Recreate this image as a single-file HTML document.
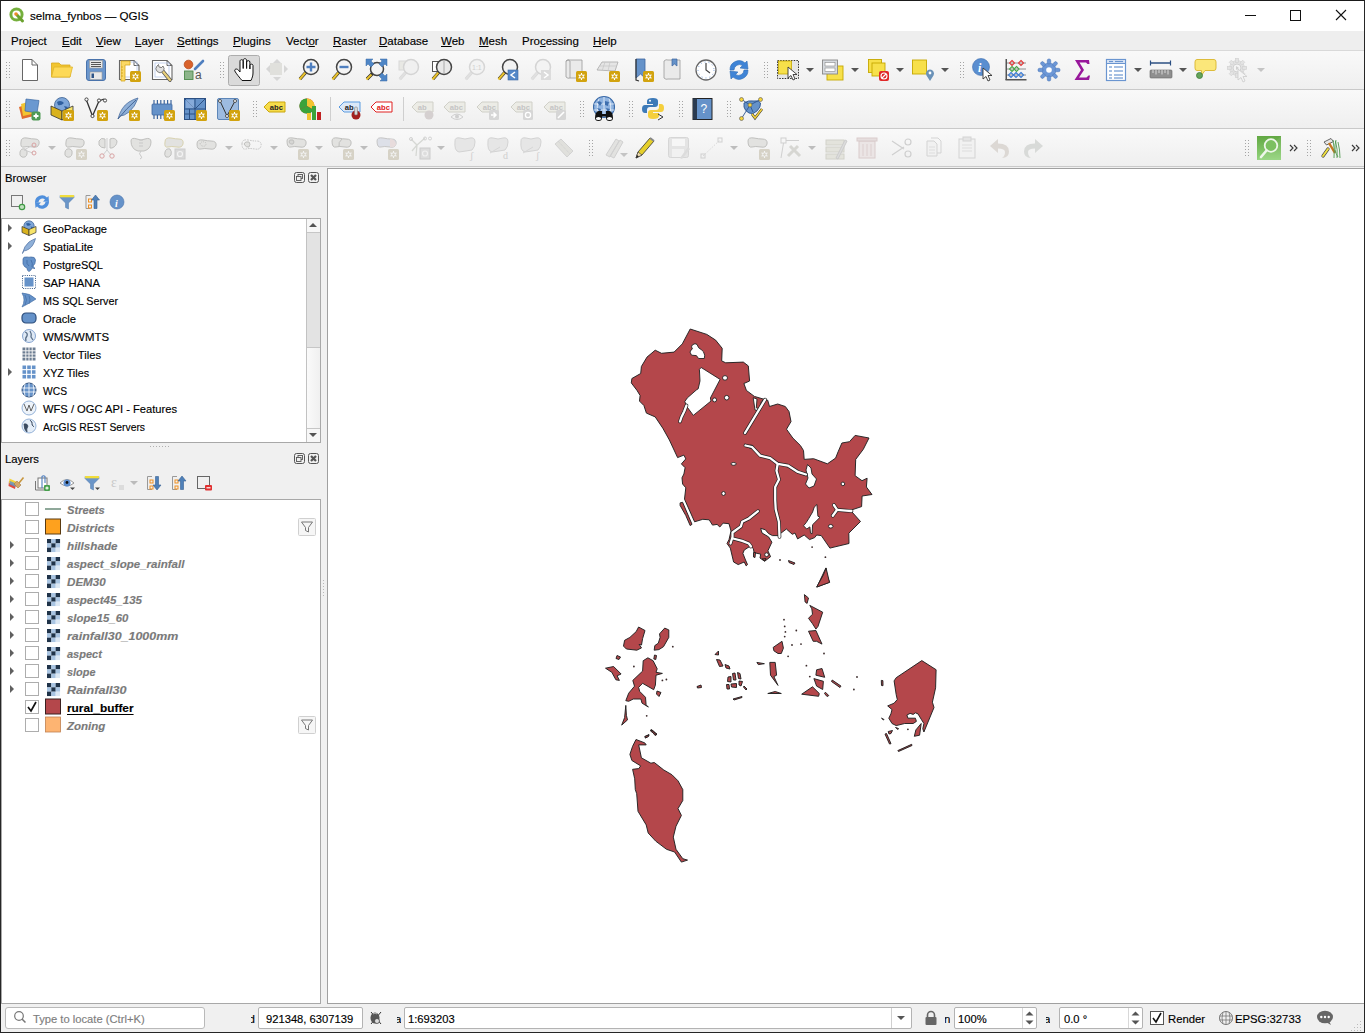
<!DOCTYPE html>
<html><head><meta charset="utf-8">
<style>
*{box-sizing:border-box;margin:0;padding:0}
html,body{width:1365px;height:1033px;overflow:hidden;background:#f0f0f0;font-family:"Liberation Sans",sans-serif;font-size:11.5px;color:#000}
.a{position:absolute}
.t{position:absolute;white-space:nowrap;line-height:14px;-webkit-text-stroke:0.15px currentColor}
#win{position:absolute;left:0;top:0;width:1365px;height:1033px;border:1px solid #262626;border-top-color:#1a1a1a}
#title{position:absolute;left:1px;top:1px;width:1363px;height:30px;background:#fff}
#menu{position:absolute;left:1px;top:31px;width:1363px;height:20px;background:#eeeeee;border-bottom:1px solid #d9d9d9}
.tb{position:absolute;left:1px;width:1363px;background:linear-gradient(#f9f9f9,#efefef);border-bottom:1px solid #c9c9c9}
.grip{position:absolute;width:5px;background-image:radial-gradient(circle,#b4b4b4 0.8px,transparent 1px);background-size:3px 3px}
.u{text-decoration:underline;text-underline-offset:1px}
#canvas{position:absolute;left:327px;top:168px;width:1037px;height:836px;background:#fff;border:1px solid #a0a0a0;border-right:none}
.box{position:absolute;background:#fff;border:1px solid #a9a9a9}
#status{position:absolute;left:1px;top:1004px;width:1363px;height:28px;background:#f0f0f0}
.field{position:absolute;background:#fff;border:1px solid #b3b3b3;border-radius:2px}
.cb{position:absolute;width:13px;height:13px;border:1px solid #8a8a8a;background:#fff}
.ln{font-weight:bold;font-style:italic;color:#7a7a7a;font-size:11.6px}
.br{font-size:11.3px}
</style></head><body>
<div id="win"></div>
<div id="title">
  <div class="t" style="left:29px;top:8px;font-size:11.6px">selma_fynbos — QGIS</div>
</div>
<div id="menu">
  <div class="t" style="left:10px;top:3px">Project</div>
  <div class="t" style="left:61px;top:3px"><span class="u">E</span>dit</div>
  <div class="t" style="left:95px;top:3px"><span class="u">V</span>iew</div>
  <div class="t" style="left:134px;top:3px"><span class="u">L</span>ayer</div>
  <div class="t" style="left:176px;top:3px"><span class="u">S</span>ettings</div>
  <div class="t" style="left:232px;top:3px"><span class="u">P</span>lugins</div>
  <div class="t" style="left:285px;top:3px">Vect<span class="u">o</span>r</div>
  <div class="t" style="left:332px;top:3px"><span class="u">R</span>aster</div>
  <div class="t" style="left:378px;top:3px"><span class="u">D</span>atabase</div>
  <div class="t" style="left:440px;top:3px"><span class="u">W</span>eb</div>
  <div class="t" style="left:478px;top:3px"><span class="u">M</span>esh</div>
  <div class="t" style="left:521px;top:3px">Pro<span class="u">c</span>essing</div>
  <div class="t" style="left:592px;top:3px"><span class="u">H</span>elp</div>
</div>
<div class="tb" style="top:51px;height:39px"></div>
<div class="tb" style="top:90px;height:39px"></div>
<div class="tb" style="top:129px;height:38px"></div>

<div id="canvas"></div>
<div id="status"></div>
<div class="t" style="left:5px;top:171px;font-size:11.3px">Browser</div>
<div class="box" style="left:1px;top:218px;width:320px;height:225px;border-color:#a8a8a8"></div>
<div class="a" style="left:306px;top:219px;width:14px;height:223px;background:linear-gradient(to right,#fafafa,#f0f0f0);border-left:1px solid #c2c2c2"></div>
<div class="a" style="left:307px;top:219px;width:13px;height:14px;background:#f7f7f7;border-bottom:1px solid #c6c6c6"></div>
<div class="a" style="left:307px;top:233px;width:13px;height:115px;background:#e3e3e3;border-bottom:1px solid #c6c6c6"></div>
<div class="a" style="left:307px;top:428px;width:13px;height:14px;background:#f7f7f7;border-top:1px solid #c6c6c6"></div>
<div class="t" style="left:43px;top:222px;font-size:11.5px;display:inline-block;transform:scaleX(0.9626);transform-origin:0 0;">GeoPackage</div>
<div class="t" style="left:43px;top:240px;font-size:11.5px;display:inline-block;transform:scaleX(0.9776);transform-origin:0 0;">SpatiaLite</div>
<div class="t" style="left:43px;top:258px;font-size:11.5px;display:inline-block;transform:scaleX(0.9578);transform-origin:0 0;">PostgreSQL</div>
<div class="t" style="left:43px;top:276px;font-size:11.5px;display:inline-block;transform:scaleX(0.9836);transform-origin:0 0;">SAP HANA</div>
<div class="t" style="left:43px;top:294px;font-size:11.5px;display:inline-block;transform:scaleX(0.9364);transform-origin:0 0;">MS SQL Server</div>
<div class="t" style="left:43px;top:312px;font-size:11.5px;display:inline-block;transform:scaleX(0.9743);transform-origin:0 0;">Oracle</div>
<div class="t" style="left:43px;top:330px;font-size:11.5px;display:inline-block;transform:scaleX(0.9935);transform-origin:0 0;">WMS/WMTS</div>
<div class="t" style="left:43px;top:348px;font-size:11.5px;display:inline-block;transform:scaleX(0.9758);transform-origin:0 0;">Vector Tiles</div>
<div class="t" style="left:43px;top:366px;font-size:11.5px;display:inline-block;transform:scaleX(0.9349);transform-origin:0 0;">XYZ Tiles</div>
<div class="t" style="left:43px;top:384px;font-size:11.5px;display:inline-block;transform:scaleX(0.8945);transform-origin:0 0;">WCS</div>
<div class="t" style="left:43px;top:402px;font-size:11.5px;display:inline-block;transform:scaleX(0.9709);transform-origin:0 0;">WFS / OGC API - Features</div>
<div class="t" style="left:43px;top:420px;font-size:11.5px;display:inline-block;transform:scaleX(0.8984);transform-origin:0 0;">ArcGIS REST Servers</div>
<div class="t" style="left:5px;top:452px;font-size:11.3px">Layers</div>
<div class="box" style="left:1px;top:499px;width:320px;height:505px;border-color:#a8a8a8"></div>
<div class="t ln" style="left:67px;top:503px;display:inline-block;transform:scaleX(0.9611);transform-origin:0 0;">Streets</div>
<div class="t ln" style="left:67px;top:521px;display:inline-block;transform:scaleX(1.0277);transform-origin:0 0;">Districts</div>
<div class="t ln" style="left:67px;top:539px;display:inline-block;transform:scaleX(1.0065);transform-origin:0 0;">hillshade</div>
<div class="t ln" style="left:67px;top:557px;display:inline-block;transform:scaleX(0.9960);transform-origin:0 0;">aspect_slope_rainfall</div>
<div class="t ln" style="left:67px;top:575px;display:inline-block;transform:scaleX(1.0005);transform-origin:0 0;">DEM30</div>
<div class="t ln" style="left:67px;top:593px;display:inline-block;transform:scaleX(0.9940);transform-origin:0 0;">aspect45_135</div>
<div class="t ln" style="left:67px;top:611px;display:inline-block;transform:scaleX(0.9801);transform-origin:0 0;">slope15_60</div>
<div class="t ln" style="left:67px;top:629px;display:inline-block;transform:scaleX(1.0721);transform-origin:0 0;">rainfall30_1000mm</div>
<div class="t ln" style="left:67px;top:647px;display:inline-block;transform:scaleX(0.9497);transform-origin:0 0;">aspect</div>
<div class="t ln" style="left:67px;top:665px;display:inline-block;transform:scaleX(0.9408);transform-origin:0 0;">slope</div>
<div class="t ln" style="left:67px;top:683px;display:inline-block;transform:scaleX(1.0877);transform-origin:0 0;">Rainfall30</div>
<div class="t" style="left:67px;top:701px;font-weight:bold;font-size:11.6px;text-decoration:underline;text-underline-offset:1.5px;display:inline-block;transform:scaleX(1.0230);transform-origin:0 0;">rural_buffer</div>
<div class="t ln" style="left:67px;top:719px;display:inline-block;transform:scaleX(0.9936);transform-origin:0 0;">Zoning</div>
<div class="field" style="left:5px;top:1007px;width:200px;height:22px;border-color:#b9b9b9;border-radius:3px"></div>
<div class="t" style="left:33px;top:1012px;color:#7d7d7d;font-size:11.2px">Type to locate (Ctrl+K)</div>
<div class="a" style="left:251px;top:1012px;width:4px;height:14px;overflow:hidden"><div class="t" style="left:-2.5px;top:0;font-size:11.5px">d</div></div>
<div class="field" style="left:258px;top:1007px;width:105px;height:22px"></div>
<div class="t" style="left:266px;top:1012px;font-size:11.2px">921348, 6307139</div>
<div class="a" style="left:397px;top:1012px;width:4px;height:14px;overflow:hidden"><div class="t" style="left:-2px;top:0;font-size:11.5px">a</div></div>
<div class="field" style="left:404px;top:1007px;width:508px;height:22px"></div>
<div class="t" style="left:408px;top:1012px;font-size:11.2px">1:693203</div>
<div class="a" style="left:891px;top:1008px;width:1px;height:20px;background:#d0d0d0"></div>
<div class="a" style="left:945px;top:1012px;width:5px;height:14px;overflow:hidden"><div class="t" style="left:-1px;top:0;font-size:11.5px">n</div></div>
<div class="field" style="left:954px;top:1007px;width:83px;height:22px"></div>
<div class="t" style="left:958px;top:1012px;font-size:11.2px">100%</div>
<div class="a" style="left:1022px;top:1008px;width:1px;height:20px;background:#d8d8d8"></div>
<div class="a" style="left:1046px;top:1012px;width:4px;height:14px;overflow:hidden"><div class="t" style="left:-2px;top:0;font-size:11.5px">a</div></div>
<div class="field" style="left:1059px;top:1007px;width:84px;height:22px"></div>
<div class="t" style="left:1064px;top:1012px;font-size:11.2px">0.0 °</div>
<div class="a" style="left:1128px;top:1008px;width:1px;height:20px;background:#d8d8d8"></div>
<div class="t" style="left:1168px;top:1012px;font-size:11.3px">Render</div>
<div class="t" style="left:1235px;top:1012px;font-size:11.3px">EPSG:32733</div>

<svg class="a" style="left:0;top:0" width="1365" height="1033" viewBox="0 0 1365 1033">
<g fill="#b4474b" stroke="#222" stroke-width="0.95" stroke-linejoin="round">
<path d="M690.2,329.0 L706.8,334.4 L715.6,340.1 L722.2,348.3 L721.7,360.9 L725.7,362.8 L743.3,362.1 L748.3,365.9 L749.6,381.0 L743.9,383.5 L746.4,390.4 L754.4,396.4 L765.1,399.6 L767.7,400.2 L769.5,406.5 L777.7,404.0 L785.3,406.5 L789.0,411.5 L791.0,421.6 L786.5,429.2 L792.8,438.0 L800.4,445.5 L803.5,450.5 L804.2,459.4 L813.6,458.7 L827.4,463.8 L835.6,458.1 L838.1,451.8 L841.9,443.0 L849.5,441.7 L855.1,435.4 L869.0,438.0 L863.3,449.3 L855.7,459.4 L855.1,475.7 L862.0,480.7 L867.1,478.2 L866.4,487.0 L872.0,494.5 L862.1,496.0 L861.6,506.6 L852.0,509.8 L852.0,512.0 L860.5,521.5 L848.8,533.2 L849.0,543.5 L829.9,548.1 L821.3,535.6 L816.7,535.0 L814.7,537.6 L809.5,539.6 L804.2,535.0 L797.6,538.9 L795.0,533.0 L792.3,534.3 L786.4,529.0 L780.4,533.6 L779.1,535.6 L772.5,535.6 L768.6,533.6 L765.3,529.7 L760.7,528.4 L762.0,533.0 L768.6,536.9 L771.9,542.2 L767.9,550.8 L770.6,556.7 L764.6,561.3 L760.0,558.0 L760.7,554.1 L754.1,552.7 L753.4,548.8 L750.8,546.2 L748.1,547.5 L744.2,550.1 L742.9,553.4 L745.5,560.0 L747.5,564.6 L746.2,565.9 L744.2,562.0 L738.2,564.6 L733.6,562.0 L730.3,548.1 L727.0,543.5 L729.0,539.6 L731.0,531.0 L729.0,523.7 L723.1,523.1 L719.8,527.0 L717.1,524.4 L712.5,525.1 L709.2,519.8 L702.8,519.3 L694.6,521.8 L684.5,499.1 L685.8,487.8 L682.6,484.0 L682.0,477.8 L683.9,474.0 L685.1,467.7 L681.4,463.9 L685.8,458.9 L683.9,455.1 L677.6,457.6 L669.4,440.0 L662.8,428.2 L655.2,416.9 L646.4,413.1 L643.9,405.5 L639.5,401.1 L640.1,395.5 L637.0,390.4 L631.3,382.9 L631.9,378.5 L640.7,373.5 L641.4,366.5 L647.0,357.1 L655.2,350.2 L661.5,353.3 L674.1,352.1 L682.3,343.9 Z"/>
<path d="M680.1,502.9 L682.6,502.3 L692.0,524.3 L690.2,525.6 L685.8,515.5 L680.1,505.4 Z"/>
<path d="M753.5,552.5 L755.5,552.5 L755.0,557.5 L753.5,557.0 Z"/>
<path d="M825.9,567.9 L827.0,575.8 L829.6,582.2 L816.9,587.0 L822.2,575.8 Z"/>
<path d="M638.6,627.0 L645.0,630.5 L642.6,638.6 L641.5,645.0 L639.1,644.4 L641.5,647.9 L636.8,650.2 L626.4,649.0 L623.5,646.1 L624.6,640.3 L629.9,637.4 L636.2,631.6 Z"/>
<path d="M664.7,628.1 L668.8,629.9 L668.8,637.4 L663.5,646.7 L658.9,649.6 L654.2,650.2 L654.8,645.6 L658.3,643.2 L660.1,637.4 L659.5,633.9 Z"/>
<path d="M605.5,668.2 L613.6,666.5 L621.1,674.0 L617.1,675.8 L619.4,680.4 L615.9,679.8 L611.8,672.3 Z"/>
<path d="M647.9,657.8 L653.1,660.7 L657.2,668.8 L656.0,672.3 L662.4,673.4 L656.0,675.2 L655.4,685.1 L653.7,689.7 L642.6,683.3 L638.6,687.4 L639.7,691.4 L645.5,697.3 L646.1,704.8 L648.4,707.1 L642.0,703.1 L640.9,699.0 L633.3,699.0 L628.7,701.3 L625.8,700.7 L628.7,693.2 L634.5,686.2 L632.8,680.4 L642.6,671.1 L643.2,660.7 Z"/>
<path d="M625.8,705.4 L626.4,715.3 L627.5,719.9 L621.7,725.1 L624.6,717.6 Z"/>
<path d="M654.5,655.0 L656.5,655.5 L655.8,659.5 L653.8,659.0 Z"/>
<path d="M617.0,655.5 L620.5,657.0 L619.0,659.5 L616.0,658.5 Z"/>
<path d="M657.0,691.0 L661.0,692.5 L659.0,696.5 L656.5,694.0 Z"/>
<path d="M697.0,686.5 L701.0,685.0 L701.5,687.5 L697.5,688.0 Z"/>
<path d="M651.0,729.5 L657.0,734.0 L656.0,735.0 L650.5,731.0 Z"/>
<path d="M645.0,736.5 L649.0,734.5 L648.5,736.0 L645.5,738.0 Z"/>
<path d="M826.1,568.1 L829.5,582.4 L816.6,587.1 L823.4,574.9 Z"/>
<path d="M804.4,594.6 L808.5,598.0 L807.1,603.4 L805.1,602.0 Z"/>
<path d="M809.8,605.4 L822.7,612.2 L818.0,626.4 L815.9,629.1 L812.5,623.7 L808.5,618.3 L812.5,614.2 L811.8,608.8 Z"/>
<path d="M808.5,631.2 L815.9,630.5 L822.0,644.1 L816.6,641.3 L813.2,641.3 Z"/>
<path d="M773.2,647.4 L782.0,641.3 L783.4,648.1 L781.3,653.5 L778.0,653.5 L773.9,650.8 Z"/>
<path d="M769.8,662.4 L775.2,662.4 L776.6,675.2 L773.9,676.6 L778.0,685.4 L770.5,675.2 Z"/>
<path d="M756.9,662.4 L764.4,663.7 L758.3,664.6 Z"/>
<path d="M767.8,693.5 L781.3,693.5 L775.2,691.5 Z"/>
<path d="M816.6,669.8 L822.0,668.5 L824.7,677.3 L815.9,675.2 Z"/>
<path d="M813.9,678.6 L823.4,681.3 L822.7,689.5 L816.6,686.1 Z"/>
<path d="M801.7,694.2 L812.5,686.8 L819.3,693.5 L818.6,696.3 Z"/>
<path d="M832.2,680.0 L841.0,686.1 L840.0,687.5 L831.5,681.5 Z"/>
<path d="M825.4,692.2 L828.8,695.6 L827.0,696.5 L824.5,693.5 Z"/>
<path d="M715.0,654.5 L718.5,651.0 L718.5,655.0 Z"/>
<path d="M716.5,659.5 L720.0,660.0 L723.0,666.0 L719.5,666.5 Z"/>
<path d="M725.0,664.5 L729.0,666.0 L730.0,669.0 L726.0,668.0 Z"/>
<path d="M728.0,677.0 L731.0,676.5 L731.0,682.0 L727.5,681.5 Z"/>
<path d="M732.5,673.5 L735.0,673.0 L736.0,680.0 L733.5,680.0 Z"/>
<path d="M737.5,672.5 L740.0,673.5 L741.0,679.0 L738.5,678.5 Z"/>
<path d="M731.0,684.0 L736.5,683.5 L736.5,687.5 L731.5,687.0 Z"/>
<path d="M726.5,684.5 L729.0,684.5 L729.5,689.0 L727.0,689.0 Z"/>
<path d="M739.0,681.0 L742.5,681.5 L741.0,686.0 L739.0,685.0 Z"/>
<path d="M744.0,686.0 L747.0,689.0 L746.0,690.0 L743.5,687.0 Z"/>
<path d="M733.0,699.0 L742.0,696.5 L742.0,697.5 L734.0,700.0 Z"/>
<path d="M788.5,560.5 L795.0,563.0 L794.0,564.5 L789.0,562.5 Z"/>
<path d="M762.0,559.0 L766.0,558.5 L765.0,561.0 Z"/>
<path d="M921.8,660.6 L936.1,669.7 L935.6,687.8 L932.4,702.2 L934.0,707.5 L923.9,732.0 L922.8,728.8 L923.9,723.5 L921.2,719.2 L918.0,713.9 L915.4,712.8 L913.2,714.4 L910.1,713.4 L906.9,715.0 L907.9,718.2 L915.4,718.2 L916.4,721.4 L913.2,723.5 L904.7,723.5 L896.2,725.6 L892.0,723.5 L888.8,718.2 L890.9,713.9 L892.0,709.6 L887.7,705.9 L894.1,703.2 L897.3,699.5 L896.2,694.7 L894.1,680.9 L896.2,677.7 Z"/>
<path d="M921.2,723.5 L919.6,735.2 L914.3,736.3 L915.9,729.9 Z"/>
<path d="M881.3,680.4 L882.9,680.6 L883.0,685.7 L881.5,685.5 Z"/>
<path d="M885.0,734.1 L886.5,733.5 L891.0,743.7 L889.5,744.0 Z"/>
<path d="M888.2,731.5 L892.5,730.5 L891.0,733.5 L889.0,734.0 Z"/>
<path d="M897.8,750.6 L911.7,744.3 L912.0,745.5 L898.5,751.5 Z"/>
<path d="M881.5,718.2 L884.0,719.5 L883.5,720.0 Z"/>
<path d="M895.5,727.5 L898.5,728.5 L898.0,729.5 Z"/>
<path d="M636.0,739.5 L644.8,742.9 L646.2,744.9 L638.7,744.9 L641.4,757.8 L650.9,763.2 L654.3,762.5 L663.8,770.0 L671.9,774.7 L678.0,780.8 L682.8,789.6 L682.8,800.5 L678.0,808.6 L681.4,815.4 L676.0,826.2 L673.3,837.1 L676.0,849.3 L682.8,858.7 L687.5,860.1 L681.4,862.1 L674.6,852.0 L666.5,849.3 L655.7,841.1 L648.2,833.0 L646.2,824.9 L638.0,811.3 L636.7,793.7 L635.3,789.6 L634.7,778.8 L632.6,769.3 L638.7,768.6 L640.7,765.9 L631.9,760.5 L629.9,754.4 L632.6,746.3 Z"/>
<path d="M644.8,736.5 L648.9,735.0 L648.5,736.5 L645.5,738.0 Z"/>
<path d="M651.0,730.0 L653.0,730.5 L656.3,735.0 L655.0,735.4 Z"/>
</g>
<g fill="#fff" stroke="#222" stroke-width="0.9" stroke-linejoin="round">
<path d="M695.0,343.7 L697.0,344.4 L698.6,347.7 L701.6,349.9 L703.4,351.6 L704.7,355.2 L704.3,358.5 L698.6,358.5 L696.4,355.6 L691.5,355.2 L690.0,352.1 L691.1,349.9 L692.4,349.0 L691.5,346.8 L692.4,344.8 Z"/>
<path d="M701.2,367.5 L720.1,379.4 L710.4,398.0 L711.0,401.0 L693.3,415.4 L687.2,407.1 L684.8,401.6 L687.2,398.0 L696.3,390.0 L698.2,388.8 L700.0,380.9 L699.4,369.3 Z"/>
<path d="M753.2,397.7 L757.0,399.0 L756.3,407.8 L759.5,409.0 L761.4,401.5 L763.0,400.0 L760.0,411.0 L755.0,410.0 Z"/>
<path d="M807.5,464.5 L811.0,468.0 L812.0,474.0 L816.5,479.0 L814.0,486.0 L809.0,488.0 L805.5,484.0 L808.0,478.0 L806.0,470.0 Z"/>
<path d="M816.9,504.5 L817.9,516.2 L820.0,517.3 L812.6,524.7 L812.1,533.8 L810.5,533.2 L809.9,526.9 L806.7,529.0 L803.5,525.8 L806.2,522.6 L808.9,518.3 L812.6,512.0 L814.2,507.2 Z"/>
<ellipse cx="766.6" cy="554.7" rx="1.9" ry="1.9"/>
<ellipse cx="725" cy="377.9" rx="2.5" ry="2.3"/>
<ellipse cx="714.6" cy="399.9" rx="2" ry="2"/>
<ellipse cx="726.7" cy="397.7" rx="2.3" ry="2.3"/>
<ellipse cx="842.9" cy="483.9" rx="1.8" ry="1.8"/>
<ellipse cx="723.5" cy="493.5" rx="1.8" ry="2"/>
<ellipse cx="733.6" cy="463.9" rx="2.6" ry="1.4"/>
<ellipse cx="830.7" cy="526.3" rx="2.3" ry="1.8"/>
<ellipse cx="751" cy="446.8" rx="2.2" ry="1.8"/>
</g>
<g fill="none" stroke-linejoin="round" stroke-linecap="round">
<path d="M686.5,405.5 L684.2,411.5 L681.5,417.0 L680.0,421.5" stroke="#222" stroke-width="3.7"/>
<path d="M765.1,399.6 L745.0,433.0" stroke="#222" stroke-width="3.7"/>
<path d="M745.5,445.5 L752.0,447.0 L760.1,455.6 L770.2,458.1 L777.7,463.8 L787.8,465.6 L797.9,471.9 L806.0,474.5" stroke="#222" stroke-width="3.7"/>
<path d="M777.7,463.8 L776.5,470.7 L779.0,479.5 L775.2,487.0 L775.2,500.0 L775.7,509.2 L778.9,521.8 L779.5,537.0" stroke="#222" stroke-width="3.7"/>
<path d="M758.0,511.2 L748.8,518.5 L742.2,521.8 L740.9,526.4 L735.6,530.3 L732.5,532.5 L732.5,537.0 L730.5,543.5" stroke="#222" stroke-width="3.7"/>
<path d="M733.0,538.5 L742.2,540.9 L748.8,543.5 L751.0,546.5" stroke="#222" stroke-width="3.7"/>
<path d="M833.9,505.0 L837.1,509.8 L832.8,515.7" stroke="#222" stroke-width="3.7"/>
<path d="M837.1,509.8 L846.0,510.6 L851.5,511.0" stroke="#222" stroke-width="3.7"/>
<path d="M686.5,405.5 L684.2,411.5 L681.5,417.0 L680.0,421.5" stroke="#fff" stroke-width="2.3"/>
<path d="M765.1,399.6 L745.0,433.0" stroke="#fff" stroke-width="2.3"/>
<path d="M745.5,445.5 L752.0,447.0 L760.1,455.6 L770.2,458.1 L777.7,463.8 L787.8,465.6 L797.9,471.9 L806.0,474.5" stroke="#fff" stroke-width="2.3"/>
<path d="M777.7,463.8 L776.5,470.7 L779.0,479.5 L775.2,487.0 L775.2,500.0 L775.7,509.2 L778.9,521.8 L779.5,537.0" stroke="#fff" stroke-width="2.3"/>
<path d="M758.0,511.2 L748.8,518.5 L742.2,521.8 L740.9,526.4 L735.6,530.3 L732.5,532.5 L732.5,537.0 L730.5,543.5" stroke="#fff" stroke-width="2.3"/>
<path d="M733.0,538.5 L742.2,540.9 L748.8,543.5 L751.0,546.5" stroke="#fff" stroke-width="2.3"/>
<path d="M833.9,505.0 L837.1,509.8 L832.8,515.7" stroke="#fff" stroke-width="2.3"/>
<path d="M837.1,509.8 L846.0,510.6 L851.5,511.0" stroke="#fff" stroke-width="2.3"/>
</g>
<g fill="#3a2a2a">
<circle cx="812.1" cy="547.1" r="0.9"/>
<circle cx="825.4" cy="557.2" r="0.9"/>
<circle cx="784" cy="619.7" r="0.9"/>
<circle cx="784.7" cy="626.4" r="0.9"/>
<circle cx="785.4" cy="631.9" r="0.9"/>
<circle cx="784.7" cy="636.6" r="0.9"/>
<circle cx="796.3" cy="630.5" r="0.9"/>
<circle cx="801" cy="644.1" r="0.9"/>
<circle cx="792" cy="645" r="0.9"/>
<circle cx="788.1" cy="656.3" r="0.9"/>
<circle cx="824" cy="653.5" r="0.9"/>
<circle cx="806.4" cy="665.7" r="0.9"/>
<circle cx="809.8" cy="676.6" r="0.9"/>
<circle cx="853.9" cy="689.5" r="0.9"/>
<circle cx="672.8" cy="646.7" r="0.9"/>
<circle cx="633.9" cy="666.5" r="0.9"/>
<circle cx="646.7" cy="715.8" r="0.9"/>
<circle cx="662.4" cy="680.4" r="0.9"/>
<circle cx="666.4" cy="679.5" r="0.9"/>
<circle cx="907.9" cy="729.3" r="0.9"/>
<circle cx="857" cy="677" r="0.9"/>
<circle cx="780" cy="560" r="0.9"/>
</g>
</svg>
<svg class="a" style="left:0;top:0" width="1365" height="1033" font-family="Liberation Sans"><g fill="#a4a4a4"><rect x="6" y="62" width="1" height="1"/><rect x="9" y="62" width="1" height="1"/><rect x="6" y="65" width="1" height="1"/><rect x="9" y="65" width="1" height="1"/><rect x="6" y="68" width="1" height="1"/><rect x="9" y="68" width="1" height="1"/><rect x="6" y="71" width="1" height="1"/><rect x="9" y="71" width="1" height="1"/><rect x="6" y="74" width="1" height="1"/><rect x="9" y="74" width="1" height="1"/><rect x="6" y="77" width="1" height="1"/><rect x="9" y="77" width="1" height="1"/></g>
<g transform="translate(18,58)" fill="none"><path d="M4.5,1.5 H14 L19.5,7 V22.5 H4.5 Z" fill="#fff" stroke="#666"/><path d="M14,1.5 V7 H19.5" fill="none" stroke="#666"/></g>
<g transform="translate(50,58)" fill="none"><path d="M1.5,5 H9 L11,7 H20 V19 H1.5 Z" fill="#f2c530" stroke="#d8a820" stroke-width="0.8"/><path d="M4,9 H22.5 L20,19 H1.5 Z" fill="#fdd957" stroke="#e0b52a" stroke-width="0.8"/></g>
<g transform="translate(84,58)" fill="none"><rect x="2.5" y="1.5" width="19" height="21" rx="2.5" fill="#6b96cc" stroke="#4a73ab"/><rect x="5.5" y="2.5" width="13" height="7.5" fill="#e8e8e8" stroke="#9a9a9a" stroke-width="0.6"/><g stroke="#555" stroke-width="1"><line x1="7" y1="4.5" x2="17" y2="4.5"/><line x1="7" y1="6.5" x2="17" y2="6.5"/><line x1="7" y1="8.5" x2="17" y2="8.5"/></g><rect x="6" y="14" width="12" height="7.5" fill="#e9e9e9" stroke="#9a9a9a" stroke-width="0.6"/><rect x="7.5" y="15.5" width="2.5" height="4.5" fill="#2f5587"/></g>
<g transform="translate(117,58)" fill="none"><path d="M2.5,2.5 H17 L22,7.5 V21.5 H2.5 Z" fill="#fff" stroke="#666" stroke-width="1.1"/><path d="M17,2.5 V7.5 H22" fill="none" stroke="#666"/><rect x="6" y="4" width="14" height="15" fill="none" stroke="#b7c9ea" stroke-width="0.8"/><path d="M4,3 H13 V7 H8 V23 H4 Z" fill="#fbd966" stroke="#d8a820" stroke-width="0.8"/><g stroke="#c99a10" stroke-width="0.7"><line x1="4" y1="9" x2="6" y2="9"/><line x1="4" y1="12" x2="6" y2="12"/><line x1="4" y1="15" x2="6" y2="15"/><line x1="4" y1="18" x2="6" y2="18"/></g><rect x="13" y="13" width="11" height="11" rx="1.5" fill="#d2a30f"/><g stroke="#fff" stroke-width="1.1"><line x1="18.5" y1="15" x2="18.5" y2="22"/><line x1="15.5" y1="16.8" x2="21.5" y2="20.2"/><line x1="15.5" y1="20.2" x2="21.5" y2="16.8"/></g><circle cx="18.5" cy="18.5" r="1.8" fill="#d2a30f" stroke="#fff" stroke-width="1"/></g>
<g transform="translate(150,58)" fill="none"><path d="M2.5,2.5 H17 L22,7.5 V21.5 H2.5 Z" fill="#fff" stroke="#666" stroke-width="1.1"/><path d="M17,2.5 V7.5 H22" fill="none" stroke="#666"/><rect x="5" y="5" width="14" height="14" fill="none" stroke="#b7c9ea" stroke-width="0.8"/><path d="M11,11 L20,22" stroke="#555" stroke-width="3.6" stroke-linecap="round"/><path d="M11,11 L20,22" stroke="#e9d07a" stroke-width="2.2" stroke-linecap="round"/><path d="M7,8 A4,4 0 1 0 13,8 L11.5,9.5 L9,9 L8.5,6.5 Z" fill="#e0e0e0" stroke="#666" stroke-width="0.8"/></g>
<g transform="translate(182,58)" fill="none"><circle cx="6.5" cy="6.5" r="4.3" fill="#d9622b" stroke="#b84d1e" stroke-width="0.8"/><line x1="13" y1="11" x2="21" y2="3" stroke="#4f7fbf" stroke-width="2.6" stroke-linecap="round"/><rect x="2.5" y="13" width="8.5" height="8.5" fill="#8db58a" stroke="#4e8a4a" stroke-width="0.9"/><text x="13" y="21" font-family="Liberation Sans" font-size="12" fill="#555">a</text></g>
<g fill="#a4a4a4"><rect x="220" y="62" width="1" height="1"/><rect x="223" y="62" width="1" height="1"/><rect x="220" y="65" width="1" height="1"/><rect x="223" y="65" width="1" height="1"/><rect x="220" y="68" width="1" height="1"/><rect x="223" y="68" width="1" height="1"/><rect x="220" y="71" width="1" height="1"/><rect x="223" y="71" width="1" height="1"/><rect x="220" y="74" width="1" height="1"/><rect x="223" y="74" width="1" height="1"/><rect x="220" y="77" width="1" height="1"/><rect x="223" y="77" width="1" height="1"/></g>
<rect x="228.5" y="55.5" width="31" height="30" rx="2" fill="#dadada" stroke="#adadad"/>
<g transform="translate(232,58)" fill="none"><path d="M10,22.5 C8,20 4,15.5 2.8,13 C2.2,11 4.8,10.2 6.5,12.2 L8,14 V3.2 C8,1.2 11.2,1.2 11.2,3.2 V10.5 V2.2 C11.2,0.2 14.6,0.2 14.6,2.2 V10.5 V4 C14.6,2.2 17.9,2.2 17.9,4 V11 V7.5 C17.9,5.7 21,5.7 21,7.5 V15 C21,18 20,20 19,22.5 Z" fill="#fff" stroke="#111" stroke-width="1" stroke-linejoin="round"/></g>
<g transform="translate(265,58)" fill="none"><rect x="5" y="5" width="12" height="12" fill="#e0e0dc"/><path d="M12,1 L16,5 H8 Z M12,23 L16,19 H8 Z M1,11 L5,7 V15 Z M23,11 L19,7 V15 Z" fill="#d6d6d6"/></g>
<g transform="translate(297,58)" fill="none"><line x1="3" y1="21" x2="9.5" y2="13.5" stroke="#222" stroke-width="3.2" stroke-linecap="butt"/><line x1="2.5" y1="21.5" x2="8.5" y2="14.5" stroke="#e8c12e" stroke-width="2.2"/><circle cx="14" cy="9" r="7.5" fill="#f4f4f4" stroke="#444" stroke-width="1.5"/><path d="M14,4.5 V13.5 M9.5,9 H18.5" stroke="#4f7fbf" stroke-width="2.4"/></g>
<g transform="translate(330,58)" fill="none"><line x1="3" y1="21" x2="9.5" y2="13.5" stroke="#222" stroke-width="3.2" stroke-linecap="butt"/><line x1="2.5" y1="21.5" x2="8.5" y2="14.5" stroke="#e8c12e" stroke-width="2.2"/><circle cx="14" cy="9" r="7.5" fill="#f4f4f4" stroke="#444" stroke-width="1.5"/><path d="M9.5,9 H18.5" stroke="#4f7fbf" stroke-width="2.4"/></g>
<g transform="translate(364,58)" fill="none"><line x1="3" y1="21" x2="8.5" y2="15.5" stroke="#222" stroke-width="3.2" stroke-linecap="butt"/><line x1="2.5" y1="21.5" x2="7.5" y2="16.5" stroke="#e8c12e" stroke-width="2.2"/><circle cx="13" cy="11" r="6.5" fill="#f4f4f4" stroke="#444" stroke-width="1.5"/><path d="M2,1 H9 L7,3 L10,6 L7,9 L4,6 L2,8 Z M23,1 V8 L21,6 L18,9 L15,6 L18,3 L16,1 Z M23,23 H16 L18,21 L15,18 L18,15 L21,18 L23,16 Z" fill="#4f86c6" stroke="#3a6aa5" stroke-width="0.5"/></g>
<g transform="translate(397,58)" fill="none"><rect x="2" y="3" width="9" height="9" fill="#e8e8e4" stroke="#d8d8d8"/><line x1="3" y1="21" x2="9.5" y2="13.5" stroke="#d6d6d6" stroke-width="3.2" stroke-linecap="butt"/><line x1="2.5" y1="21.5" x2="8.5" y2="14.5" stroke="#e0e0e0" stroke-width="2.2"/><circle cx="14" cy="9" r="7.5" fill="#f0f0f0" stroke="#d4d4d4" stroke-width="1.5"/></g>
<g transform="translate(430,58)" fill="none"><rect x="2.5" y="3.5" width="10" height="10" fill="#fff" stroke="#555"/><line x1="3" y1="21" x2="9.5" y2="13.5" stroke="#222" stroke-width="3.2" stroke-linecap="butt"/><line x1="2.5" y1="21.5" x2="8.5" y2="14.5" stroke="#e8c12e" stroke-width="2.2"/><circle cx="14" cy="9" r="7.5" fill="#e9e9e9" stroke="#444" stroke-width="1.5"/><line x1="14" y1="2" x2="14" y2="16" stroke="#aaa"/></g>
<g transform="translate(463,58)" fill="none"><line x1="3" y1="21" x2="9.5" y2="13.5" stroke="#d6d6d6" stroke-width="3.2" stroke-linecap="butt"/><line x1="2.5" y1="21.5" x2="8.5" y2="14.5" stroke="#e0e0e0" stroke-width="2.2"/><circle cx="14" cy="9" r="7.5" fill="#f3f3f3" stroke="#d6d6d6" stroke-width="1.5"/><text x="9" y="12" font-size="7" fill="#d0d0d0" font-family="Liberation Sans">1:1</text></g>
<g transform="translate(496,58)" fill="none"><line x1="3" y1="21" x2="9.5" y2="13.5" stroke="#222" stroke-width="3.2" stroke-linecap="butt"/><line x1="2.5" y1="21.5" x2="8.5" y2="14.5" stroke="#e8c12e" stroke-width="2.2"/><circle cx="14" cy="9" r="7.5" fill="#f2f2f2" stroke="#444" stroke-width="1.5"/><rect x="12" y="12" width="10" height="10" fill="#5488c8" stroke="#3c6aa3" stroke-width="0.6"/><path d="M19,14 L15,17 L19,20" fill="none" stroke="#fff" stroke-width="1.5"/></g>
<g transform="translate(529,58)" fill="none"><line x1="3" y1="21" x2="9.5" y2="13.5" stroke="#d6d6d6" stroke-width="3.2" stroke-linecap="butt"/><line x1="2.5" y1="21.5" x2="8.5" y2="14.5" stroke="#e0e0e0" stroke-width="2.2"/><circle cx="14" cy="9" r="7.5" fill="#f3f3f3" stroke="#d4d4d4" stroke-width="1.5"/><rect x="12" y="12" width="10" height="10" fill="#dcdcdc"/><path d="M15,14 L19,17 L15,20" fill="none" stroke="#fff" stroke-width="1.5"/></g>
<g transform="translate(563,58)" fill="none"><path d="M3,3 Q5,1 7,2 H19 V20 H7 Q5,21 3,19 Z" fill="#eaeaea" stroke="#999" stroke-width="0.8"/><path d="M3,3 Q5,1 7,3 V20" fill="none" stroke="#999" stroke-width="0.8"/><rect x="13" y="13" width="11" height="11" rx="1.5" fill="#d2a30f"/><g stroke="#fff" stroke-width="1.1"><line x1="18.5" y1="15" x2="18.5" y2="22"/><line x1="15.5" y1="16.8" x2="21.5" y2="20.2"/><line x1="15.5" y1="20.2" x2="21.5" y2="16.8"/></g><circle cx="18.5" cy="18.5" r="1.8" fill="#d2a30f" stroke="#fff" stroke-width="1"/></g>
<g transform="translate(596,58)" fill="none"><path d="M1,12 L6,4 H22 L19,13 Z" fill="#e5e5e5" stroke="#aaa" stroke-width="0.8"/><path d="M4,8 H21 M9,4 L6,13 M14,4 L12,13" stroke="#c6c6c6" stroke-width="0.7"/><rect x="13" y="13" width="11" height="11" rx="1.5" fill="#d2a30f"/><g stroke="#fff" stroke-width="1.1"><line x1="18.5" y1="15" x2="18.5" y2="22"/><line x1="15.5" y1="16.8" x2="21.5" y2="20.2"/><line x1="15.5" y1="20.2" x2="21.5" y2="16.8"/></g><circle cx="18.5" cy="18.5" r="1.8" fill="#d2a30f" stroke="#fff" stroke-width="1"/></g>
<g transform="translate(630,58)" fill="none"><path d="M6,1 H15 V20 L10.5,16 L6,20 Z" fill="#6592c9" stroke="#3d669e" stroke-width="0.8"/><path d="M6,1 V22 L9,23" fill="none" stroke="#333" stroke-width="1.2"/><rect x="13" y="13" width="11" height="11" rx="1.5" fill="#d2a30f"/><g stroke="#fff" stroke-width="1.1"><line x1="18.5" y1="15" x2="18.5" y2="22"/><line x1="15.5" y1="16.8" x2="21.5" y2="20.2"/><line x1="15.5" y1="20.2" x2="21.5" y2="16.8"/></g><circle cx="18.5" cy="18.5" r="1.8" fill="#d2a30f" stroke="#fff" stroke-width="1"/></g>
<g transform="translate(661,58)" fill="none"><path d="M3,3 Q5,1 7,2 H19 V21 H7 Q5,22 3,20 Z" fill="#eaeaea" stroke="#999" stroke-width="0.8"/><path d="M11,1 H16 V8 L13.5,6 L11,8 Z" fill="#6592c9" stroke="#3d669e" stroke-width="0.7"/></g>
<g transform="translate(694,58)" fill="none"><circle cx="12" cy="12" r="10" fill="#fff" stroke="#666" stroke-width="1.3"/><circle cx="12" cy="12" r="8" fill="none" stroke="#5b8ad0" stroke-width="0.8" stroke-dasharray="1 3"/><path d="M12,5 V12 L16,15" fill="none" stroke="#444" stroke-width="1.2"/></g>
<g transform="translate(727,58)" fill="none"><path d="M3,12 A9,9 0 0 1 18,5 L20,3 L21,11 L13,10 L15.5,7.5 A5.5,5.5 0 0 0 7,12 Z" fill="#3f84d6" stroke="#2f6db5" stroke-width="0.6"/><path d="M21,12 A9,9 0 0 1 6,19 L4,21 L3,13 L11,14 L8.5,16.5 A5.5,5.5 0 0 0 17,12 Z" fill="#3f84d6" stroke="#2f6db5" stroke-width="0.6"/></g>
<g fill="#a4a4a4"><rect x="764" y="62" width="1" height="1"/><rect x="767" y="62" width="1" height="1"/><rect x="764" y="65" width="1" height="1"/><rect x="767" y="65" width="1" height="1"/><rect x="764" y="68" width="1" height="1"/><rect x="767" y="68" width="1" height="1"/><rect x="764" y="71" width="1" height="1"/><rect x="767" y="71" width="1" height="1"/><rect x="764" y="74" width="1" height="1"/><rect x="767" y="74" width="1" height="1"/><rect x="764" y="77" width="1" height="1"/><rect x="767" y="77" width="1" height="1"/></g>
<g transform="translate(776,58)" fill="none"><rect x="1.5" y="2.5" width="21" height="18" fill="#e6e6e6" stroke="#333" stroke-dasharray="1.5 1.2"/><rect x="2.5" y="3" width="13" height="13" fill="#f7e04a" stroke="#c5a800" stroke-width="0.8"/><path transform="translate(12,9) scale(1)" d="M0,0 L0,11 L3,8.5 L5,13 L7,12 L5,7.5 L9,7.5 Z" fill="#fff" stroke="#333" stroke-width="0.9" stroke-linejoin="round"/></g>
<path d="M806,68 L814,68 L810,72 Z" fill="#555"/>
<g transform="translate(821,58)" fill="none"><rect x="6" y="8" width="16" height="14" fill="#f7e04a" stroke="#c5a800" stroke-width="0.9"/><rect x="1.5" y="2" width="15" height="14" fill="#d7dbe0" stroke="#888" stroke-width="0.9"/><rect x="4" y="4.5" width="10" height="3.5" fill="#fff" stroke="#888" stroke-width="0.6"/><rect x="4" y="10" width="10" height="3.5" fill="#fff" stroke="#888" stroke-width="0.6"/></g>
<path d="M851,68 L859,68 L855,72 Z" fill="#555"/>
<g transform="translate(867,58)" fill="none"><rect x="1.5" y="1.5" width="13" height="13" fill="#f7e04a" stroke="#c5a800" stroke-width="0.9"/><rect x="5" y="5" width="13" height="13" fill="#f7e04a" stroke="#c5a800" stroke-width="0.9"/><rect x="12" y="13" width="10" height="10" rx="2" fill="#e02828"/><circle cx="17" cy="18" r="3" fill="none" stroke="#fff" stroke-width="1.1"/><line x1="15" y1="20" x2="19" y2="16" stroke="#fff" stroke-width="1.1"/></g>
<path d="M896,68 L904,68 L900,72 Z" fill="#555"/>
<g transform="translate(911,58)" fill="none"><rect x="1.5" y="2" width="14" height="14" fill="#f7e04a" stroke="#c5a800" stroke-width="0.9"/><path d="M19,23 L15.5,17.5 A4,4 0 1 1 22.5,17.5 Z" fill="#6a92b8"/><circle cx="19" cy="15" r="1.4" fill="#fff"/></g>
<path d="M941,68 L949,68 L945,72 Z" fill="#555"/>
<g fill="#a4a4a4"><rect x="960" y="62" width="1" height="1"/><rect x="963" y="62" width="1" height="1"/><rect x="960" y="65" width="1" height="1"/><rect x="963" y="65" width="1" height="1"/><rect x="960" y="68" width="1" height="1"/><rect x="963" y="68" width="1" height="1"/><rect x="960" y="71" width="1" height="1"/><rect x="963" y="71" width="1" height="1"/><rect x="960" y="74" width="1" height="1"/><rect x="963" y="74" width="1" height="1"/><rect x="960" y="77" width="1" height="1"/><rect x="963" y="77" width="1" height="1"/></g>
<g transform="translate(971,58)" fill="none"><circle cx="10" cy="9" r="8.5" fill="#5a8ed0" stroke="#3f6fae" stroke-width="0.6"/><text x="7" y="14" font-family="Liberation Serif" font-style="italic" font-weight="bold" font-size="12" fill="#fff">i</text><path transform="translate(12,10) scale(1)" d="M0,0 L0,11 L3,8.5 L5,13 L7,12 L5,7.5 L9,7.5 Z" fill="#fff" stroke="#333" stroke-width="0.9" stroke-linejoin="round"/></g>
<g transform="translate(1004,58)" fill="none"><rect x="1.5" y="1" width="1.5" height="21" fill="#555"/><rect x="1.5" y="21" width="21" height="1.5" fill="#555"/><g stroke="#777" stroke-width="0.8"><line x1="3" y1="5" x2="22" y2="5"/><line x1="3" y1="11" x2="22" y2="11"/><line x1="3" y1="17" x2="22" y2="17"/></g><g fill="none" stroke-width="1.1"><g stroke="#e03a3a"><path d="M8,2.5 L10.5,5 L8,7.5 L5.5,5 Z"/><path d="M17,2.5 L19.5,5 L17,7.5 L14.5,5 Z"/></g><g stroke="#4aa54a"><path d="M8,8.5 L10.5,11 L8,13.5 L5.5,11 Z"/><path d="M12.5,8.5 L15,11 L12.5,13.5 L10,11 Z"/></g><g stroke="#3a7bd5"><path d="M7,14.5 L9.5,17 L7,19.5 L4.5,17 Z"/><path d="M12,14.5 L14.5,17 L12,19.5 L9.5,17 Z"/><path d="M17,14.5 L19.5,17 L17,19.5 L14.5,17 Z"/></g></g></g>
<g transform="translate(1037,58)" fill="none"><g fill="#6c97d6" stroke="#4d79bb" stroke-width="0.6"><circle cx="12" cy="12" r="7"/><rect x="10.3" y="1" width="3.4" height="5" rx="1.5" transform="rotate(0 12 12)"/><rect x="10.3" y="1" width="3.4" height="5" rx="1.5" transform="rotate(45 12 12)"/><rect x="10.3" y="1" width="3.4" height="5" rx="1.5" transform="rotate(90 12 12)"/><rect x="10.3" y="1" width="3.4" height="5" rx="1.5" transform="rotate(135 12 12)"/><rect x="10.3" y="1" width="3.4" height="5" rx="1.5" transform="rotate(180 12 12)"/><rect x="10.3" y="1" width="3.4" height="5" rx="1.5" transform="rotate(225 12 12)"/><rect x="10.3" y="1" width="3.4" height="5" rx="1.5" transform="rotate(270 12 12)"/><rect x="10.3" y="1" width="3.4" height="5" rx="1.5" transform="rotate(315 12 12)"/></g><circle cx="12" cy="12" r="2.8" fill="#fff"/></g>
<g transform="translate(1070,58)" fill="none"><path d="M5,2 H19 L19.5,6 H17.5 L16,4.5 H9.5 L14,12 L9,19.5 H16.5 L18.5,17.5 H20 L19,22 H4.5 L11,12 Z" fill="#98179b"/></g>
<g transform="translate(1104,58)" fill="none"><rect x="2.5" y="1.5" width="19" height="21" fill="#fff" stroke="#6a95d0" stroke-width="1.2"/><rect x="2.5" y="1.5" width="19" height="4" fill="#d7e3f4" stroke="#6a95d0" stroke-width="1"/><g stroke="#6a95d0" stroke-width="1.2"><line x1="5" y1="3.5" x2="9" y2="3.5"/><line x1="11" y1="3.5" x2="19" y2="3.5"/><line x1="5" y1="9" x2="8" y2="9"/><line x1="10" y1="9" x2="19" y2="9"/><line x1="5" y1="13" x2="8" y2="13"/><line x1="10" y1="13" x2="19" y2="13"/><line x1="5" y1="17" x2="8" y2="17"/><line x1="10" y1="17" x2="19" y2="17"/><line x1="5" y1="20" x2="8" y2="20"/><line x1="10" y1="20" x2="19" y2="20"/></g></g>
<path d="M1134,68 L1142,68 L1138,72 Z" fill="#555"/>
<g transform="translate(1149,58)" fill="none"><path d="M1,5 H22" stroke="#2b4f82" stroke-width="1.5"/><path d="M1.5,2.5 V7.5 M21.5,2.5 V7.5" stroke="#2b4f82" stroke-width="1.2"/><rect x="1" y="12" width="22" height="8" rx="1" fill="#8f8f8f" stroke="#666" stroke-width="0.6"/><g stroke="#eee" stroke-width="0.8"><line x1="4" y1="12" x2="4" y2="15"/><line x1="7" y1="12" x2="7" y2="16.5"/><line x1="10" y1="12" x2="10" y2="15"/><line x1="13" y1="12" x2="13" y2="16.5"/><line x1="16" y1="12" x2="16" y2="15"/><line x1="19" y1="12" x2="19" y2="16.5"/></g></g>
<path d="M1179,68 L1187,68 L1183,72 Z" fill="#555"/>
<g transform="translate(1194,58)" fill="none"><path d="M3,1.5 H20 Q22,1.5 22,4 V10 Q22,12.5 20,12.5 H11 L7,18 L7.5,12.5 H3 Q1,12.5 1,10 V4 Q1,1.5 3,1.5 Z" fill="#fbe77a" stroke="#d9b52b" stroke-width="0.9"/><circle cx="5.5" cy="17.5" r="3" fill="#63a35a" stroke="#3d7a36" stroke-width="0.8"/></g>
<g transform="translate(1226,58)" fill="none"><g fill="#e3e3e3" stroke="#d2d2d2" stroke-width="0.7"><circle cx="11" cy="10" r="7.5"/><rect x="9.5" y="0.5" width="3" height="4" transform="rotate(0 11 10)"/><rect x="9.5" y="0.5" width="3" height="4" transform="rotate(45 11 10)"/><rect x="9.5" y="0.5" width="3" height="4" transform="rotate(90 11 10)"/><rect x="9.5" y="0.5" width="3" height="4" transform="rotate(135 11 10)"/><rect x="9.5" y="0.5" width="3" height="4" transform="rotate(180 11 10)"/><rect x="9.5" y="0.5" width="3" height="4" transform="rotate(225 11 10)"/><rect x="9.5" y="0.5" width="3" height="4" transform="rotate(270 11 10)"/><rect x="9.5" y="0.5" width="3" height="4" transform="rotate(315 11 10)"/></g><circle cx="11" cy="10" r="4" fill="#f4f4f4" stroke="#d0d0d0"/><path d="M10,8 L13,10 L10,12 Z" fill="#d0d0d0"/><path transform="translate(12,11)" d="M0,0 L0,11 L3,8.5 L5,13 L7,12 L5,7.5 L9,7.5 Z" fill="#f4f4f4" stroke="#cfcfcf" stroke-width="0.9"/></g>
<path d="M1257,68 L1265,68 L1261,72 Z" fill="#c4c4c4"/>
<g fill="#a4a4a4"><rect x="6" y="101" width="1" height="1"/><rect x="9" y="101" width="1" height="1"/><rect x="6" y="104" width="1" height="1"/><rect x="9" y="104" width="1" height="1"/><rect x="6" y="107" width="1" height="1"/><rect x="9" y="107" width="1" height="1"/><rect x="6" y="110" width="1" height="1"/><rect x="9" y="110" width="1" height="1"/><rect x="6" y="113" width="1" height="1"/><rect x="9" y="113" width="1" height="1"/><rect x="6" y="116" width="1" height="1"/><rect x="9" y="116" width="1" height="1"/></g>
<g transform="translate(18,97)" fill="none"><path d="M1,10 L13,6 L16,19 L4,22 Z" fill="#e06c2e"/><path d="M3,7 L13,4 L14,17 L5,19 Z" fill="#f2c530"/><path d="M8,2 L21,3.5 L19,16 L7,14 Z" fill="#6a98d0" stroke="#3e6aa3" stroke-width="0.7"/><rect x="13.5" y="14.5" width="9" height="9" rx="2" fill="#4f9a55"/><path d="M18,16.5 V21.5 M15.5,19 H20.5" stroke="#fff" stroke-width="1.8"/></g>
<g transform="translate(50,97)" fill="none"><circle cx="12" cy="8" r="7.5" fill="#7ea6d8" stroke="#3a5f90" stroke-width="0.8"/><path d="M7,5 Q11,2.5 14,6 Q11,9 8,8 Z M14,9 L18,10 L16,13 Z" fill="#2f5f9f"/><path d="M1,9 L12,14 V23 L1,18 Z" fill="#d9b21e" stroke="#333" stroke-width="0.8" stroke-linejoin="round"/><path d="M12,14 L23,9 V18 L12,23 Z" fill="#f7e46a" stroke="#333" stroke-width="0.8" stroke-linejoin="round"/><rect x="13" y="13" width="11" height="11" rx="1.5" fill="#d2a30f"/><g stroke="#fff" stroke-width="1.1"><line x1="18.5" y1="15" x2="18.5" y2="22"/><line x1="15.5" y1="16.8" x2="21.5" y2="20.2"/><line x1="15.5" y1="20.2" x2="21.5" y2="16.8"/></g><circle cx="18.5" cy="18.5" r="1.8" fill="#d2a30f" stroke="#fff" stroke-width="1"/></g>
<g transform="translate(84,97)" fill="none"><path d="M2,2 L8.5,19 L15,4 L20,2" fill="none" stroke="#333" stroke-width="1.3"/><g fill="#fff" stroke="#333" stroke-width="0.9"><circle cx="2.5" cy="2.5" r="1.6"/><circle cx="8.5" cy="19" r="1.6"/><circle cx="15" cy="3.5" r="1.6"/><circle cx="21" cy="3.5" r="1.6"/></g><rect x="13" y="13" width="11" height="11" rx="1.5" fill="#d2a30f"/><g stroke="#fff" stroke-width="1.1"><line x1="18.5" y1="15" x2="18.5" y2="22"/><line x1="15.5" y1="16.8" x2="21.5" y2="20.2"/><line x1="15.5" y1="20.2" x2="21.5" y2="16.8"/></g><circle cx="18.5" cy="18.5" r="1.8" fill="#d2a30f" stroke="#fff" stroke-width="1"/></g>
<g transform="translate(116,97)" fill="none"><path d="M2,22 Q5,10 13,5 Q18,2 22,1 Q19,10 13,15 Q8,19 4,19 Z" fill="#8fb0d8" stroke="#4d6fa0" stroke-width="0.8"/><path d="M2,22 Q10,12 20,3" fill="none" stroke="#3d5f90" stroke-width="0.9"/><rect x="13" y="13" width="11" height="11" rx="1.5" fill="#d2a30f"/><g stroke="#fff" stroke-width="1.1"><line x1="18.5" y1="15" x2="18.5" y2="22"/><line x1="15.5" y1="16.8" x2="21.5" y2="20.2"/><line x1="15.5" y1="20.2" x2="21.5" y2="16.8"/></g><circle cx="18.5" cy="18.5" r="1.8" fill="#d2a30f" stroke="#fff" stroke-width="1"/></g>
<g transform="translate(151,97)" fill="none"><rect x="1" y="7" width="20" height="11" rx="1" fill="#6592c9" stroke="#3d669e" stroke-width="0.8"/><g stroke="#3d669e" stroke-width="1.2"><line x1="3.0" y1="3" x2="3.0" y2="7"/><line x1="3.0" y1="18" x2="3.0" y2="22"/><line x1="6.4" y1="3" x2="6.4" y2="7"/><line x1="6.4" y1="18" x2="6.4" y2="22"/><line x1="9.8" y1="3" x2="9.8" y2="7"/><line x1="9.8" y1="18" x2="9.8" y2="22"/><line x1="13.2" y1="3" x2="13.2" y2="7"/><line x1="13.2" y1="18" x2="13.2" y2="22"/><line x1="16.6" y1="3" x2="16.6" y2="7"/><line x1="16.6" y1="18" x2="16.6" y2="22"/><line x1="20.0" y1="3" x2="20.0" y2="7"/><line x1="20.0" y1="18" x2="20.0" y2="22"/></g><rect x="13" y="13" width="11" height="11" rx="1.5" fill="#d2a30f"/><g stroke="#fff" stroke-width="1.1"><line x1="18.5" y1="15" x2="18.5" y2="22"/><line x1="15.5" y1="16.8" x2="21.5" y2="20.2"/><line x1="15.5" y1="20.2" x2="21.5" y2="16.8"/></g><circle cx="18.5" cy="18.5" r="1.8" fill="#d2a30f" stroke="#fff" stroke-width="1"/></g>
<g transform="translate(183,97)" fill="none"><rect x="1.5" y="1.5" width="21" height="21" fill="#6592c9" stroke="#2c5083" stroke-width="1"/><path d="M1.5,1.5 L12,12 L22.5,1.5 M12,1.5 V22.5 M1.5,12 H22.5 M1.5,17 H12 M6.5,12 V22.5" fill="none" stroke="#2c5083" stroke-width="1"/><rect x="3" y="3" width="8" height="8" fill="#9dbbe4" opacity="0.6"/><rect x="13" y="13" width="11" height="11" rx="1.5" fill="#d2a30f"/><g stroke="#fff" stroke-width="1.1"><line x1="18.5" y1="15" x2="18.5" y2="22"/><line x1="15.5" y1="16.8" x2="21.5" y2="20.2"/><line x1="15.5" y1="20.2" x2="21.5" y2="16.8"/></g><circle cx="18.5" cy="18.5" r="1.8" fill="#d2a30f" stroke="#fff" stroke-width="1"/></g>
<g transform="translate(216,97)" fill="none"><rect x="1.5" y="1.5" width="21" height="21" rx="1.5" fill="#9dbbe0" stroke="#5d86b8" stroke-width="1"/><path d="M4,4 L11,19 L19,4" fill="none" stroke="#333" stroke-width="1"/><g fill="#fff" stroke="#333" stroke-width="0.8"><circle cx="4" cy="4" r="1.5"/><circle cx="11" cy="19" r="1.5"/><circle cx="19" cy="4" r="1.5"/></g><rect x="13" y="13" width="11" height="11" rx="1.5" fill="#d2a30f"/><g stroke="#fff" stroke-width="1.1"><line x1="18.5" y1="15" x2="18.5" y2="22"/><line x1="15.5" y1="16.8" x2="21.5" y2="20.2"/><line x1="15.5" y1="20.2" x2="21.5" y2="16.8"/></g><circle cx="18.5" cy="18.5" r="1.8" fill="#d2a30f" stroke="#fff" stroke-width="1"/></g>
<g fill="#a4a4a4"><rect x="253" y="101" width="1" height="1"/><rect x="256" y="101" width="1" height="1"/><rect x="253" y="104" width="1" height="1"/><rect x="256" y="104" width="1" height="1"/><rect x="253" y="107" width="1" height="1"/><rect x="256" y="107" width="1" height="1"/><rect x="253" y="110" width="1" height="1"/><rect x="256" y="110" width="1" height="1"/><rect x="253" y="113" width="1" height="1"/><rect x="256" y="113" width="1" height="1"/><rect x="253" y="116" width="1" height="1"/><rect x="256" y="116" width="1" height="1"/></g>
<g transform="translate(263,97)" fill="none"><path d="M1,10 L6,5 H22 V15 H6 Z" fill="#f6dc4a" stroke="#caa70f" stroke-width="1"/><text x="6.8" y="13.3" font-family="Liberation Sans" font-weight="bold" font-size="7.6" fill="#222">abc</text></g>
<g transform="translate(298,97)" fill="none"><circle cx="9" cy="9" r="7.5" fill="#d92b2b"/><path d="M9,9 V1.5 A7.5,7.5 0 0 1 15.5,12.7 Z" fill="#f2c530"/><path d="M9,9 L15.5,12.7 A7.5,7.5 0 0 1 2,12 Z" fill="#3ba33b"/><path d="M9,9 L2,12 A7.5,7.5 0 0 1 9,1.5 Z" fill="#3ba33b"/><rect x="9" y="16" width="4" height="7" fill="#f2c530"/><rect x="14" y="9" width="4" height="14" fill="#3ba33b"/><rect x="19" y="15" width="4" height="8" fill="#c02020"/></g>
<line x1="330.5" y1="97" x2="330.5" y2="121" stroke="#cfcfcf"/>
<g transform="translate(338,97)" fill="none"><path d="M1,10 L6,5 H22 V15 H6 Z" fill="#dbe8f8" stroke="#5b9be0" stroke-width="1"/><text x="6.8" y="13.3" font-family="Liberation Sans" font-weight="bold" font-size="7.6" fill="#222">ab</text><circle cx="18" cy="18" r="4.5" fill="#a31f1f"/><rect x="16.5" y="10" width="3" height="8" rx="1.2" fill="#d7d7d7" stroke="#777" stroke-width="0.5"/></g>
<g transform="translate(370,97)" fill="none"><path d="M1,10 L6,5 H22 V15 H6 Z" fill="#fff" stroke="#e02020" stroke-width="1"/><text x="6.8" y="13.3" font-family="Liberation Sans" font-weight="bold" font-size="7.6" fill="#e02020">abc</text></g>
<line x1="403.5" y1="97" x2="403.5" y2="121" stroke="#cfcfcf"/>
<g transform="translate(411,97)" fill="none"><path d="M1,10 L6,5 H22 V15 H6 Z" fill="#ecece6" stroke="#d0d0c8" stroke-width="1"/><text x="6.8" y="13.3" font-family="Liberation Sans" font-weight="bold" font-size="7.6" fill="#c4c4c4">ab</text><circle cx="18" cy="18" r="4.5" fill="#d5d0d0"/></g>
<g transform="translate(443,97)" fill="none"><path d="M1,10 L6,5 H22 V15 H6 Z" fill="#ecece6" stroke="#d0d0c8" stroke-width="1"/><text x="6.8" y="13.3" font-family="Liberation Sans" font-weight="bold" font-size="7.6" fill="#c4c4c4">abc</text><path d="M8,20 Q14,14 20,20 Q14,25 8,20 Z" fill="#f3f3f3" stroke="#cfcfcf"/><circle cx="14" cy="19.5" r="2" fill="#cfcfcf"/></g>
<g transform="translate(476,97)" fill="none"><path d="M1,10 L6,5 H22 V15 H6 Z" fill="#ecece6" stroke="#d0d0c8" stroke-width="1"/><text x="6.8" y="13.3" font-family="Liberation Sans" font-weight="bold" font-size="7.6" fill="#c4c4c4">abc</text><rect x="13" y="13" width="10" height="10" rx="1.5" fill="#d6d6d6"/><path d="M15,18 H19 M17.5,15.5 L20,18 L17.5,20.5" fill="none" stroke="#fff" stroke-width="1.5"/></g>
<g transform="translate(510,97)" fill="none"><path d="M1,10 L6,5 H22 V15 H6 Z" fill="#ecece6" stroke="#d0d0c8" stroke-width="1"/><text x="6.8" y="13.3" font-family="Liberation Sans" font-weight="bold" font-size="7.6" fill="#c4c4c4">abc</text><rect x="13" y="13" width="10" height="10" rx="1.5" fill="#d6d6d6"/><circle cx="18" cy="18" r="2.6" fill="none" stroke="#fff" stroke-width="1.3"/></g>
<g transform="translate(543,97)" fill="none"><path d="M1,10 L6,5 H22 V15 H6 Z" fill="#ecece6" stroke="#d0d0c8" stroke-width="1"/><text x="6.8" y="13.3" font-family="Liberation Sans" font-weight="bold" font-size="7.6" fill="#c4c4c4">abc</text><rect x="13" y="13" width="10" height="10" rx="1.5" fill="#d6d6d6"/><path d="M15,21 L21,15" stroke="#fff" stroke-width="1.6"/></g>
<g fill="#a4a4a4"><rect x="580" y="101" width="1" height="1"/><rect x="583" y="101" width="1" height="1"/><rect x="580" y="104" width="1" height="1"/><rect x="583" y="104" width="1" height="1"/><rect x="580" y="107" width="1" height="1"/><rect x="583" y="107" width="1" height="1"/><rect x="580" y="110" width="1" height="1"/><rect x="583" y="110" width="1" height="1"/><rect x="580" y="113" width="1" height="1"/><rect x="583" y="113" width="1" height="1"/><rect x="580" y="116" width="1" height="1"/><rect x="583" y="116" width="1" height="1"/></g>
<g transform="translate(592,97)" fill="none"><circle cx="12" cy="10" r="10.5" fill="#8fb3e0" stroke="#3a6aa8" stroke-width="1.1"/><path d="M2,7 H22 M1.8,13 H22.2 M12,0 V20 M7,1.5 Q3.5,10 7,18.5 M17,1.5 Q20.5,10 17,18.5" fill="none" stroke="#eaf1fa" stroke-width="0.8"/><path d="M5,5 Q8,3 10,6 L8,9 Z M13,4 L17,5 L16,9 L13,8 Z M14,11 L18,12 L16,16 Z M5,11 L9,12 L8,15 Z" fill="#3f6fae"/><path d="M3,21 Q3,15 6.5,14 L10,14 V17 H14 V14 L17.5,14 Q21,15 21,21 Q21,24 17.5,24 Q14,24 14,21 V19.5 H10 V21 Q10,24 6.5,24 Q3,24 3,21 Z" fill="#111"/><ellipse cx="6.5" cy="21.5" rx="2.6" ry="1.6" fill="#fff"/><ellipse cx="17.5" cy="21.5" rx="2.6" ry="1.6" fill="#fff"/></g>
<g fill="#a4a4a4"><rect x="629" y="101" width="1" height="1"/><rect x="632" y="101" width="1" height="1"/><rect x="629" y="104" width="1" height="1"/><rect x="632" y="104" width="1" height="1"/><rect x="629" y="107" width="1" height="1"/><rect x="632" y="107" width="1" height="1"/><rect x="629" y="110" width="1" height="1"/><rect x="632" y="110" width="1" height="1"/><rect x="629" y="113" width="1" height="1"/><rect x="632" y="113" width="1" height="1"/><rect x="629" y="116" width="1" height="1"/><rect x="632" y="116" width="1" height="1"/></g>
<g transform="translate(641,97)" fill="none"><path d="M12,1 Q6,1 6,4 V7 H12 V8 H4 Q1,8 1,12 Q1,16 4,16 H6 V13 Q6,10 9,10 H14 Q17,10 17,7 V4 Q17,1 12,1 Z" fill="#3d7ab8"/><path d="M12,22 Q18,22 18,19 V16 H12 V15 H20 Q23,15 23,11 Q23,7 20,7 H18 V10 Q18,13 15,13 H10 Q7,13 7,16 V19 Q7,22 12,22 Z" fill="#f5cf3c"/><circle cx="9" cy="3.8" r="1" fill="#fff"/><path d="M17,17 L22,20 L17,23" fill="none" stroke="#333" stroke-width="1"/></g>
<g fill="#a4a4a4"><rect x="679" y="101" width="1" height="1"/><rect x="682" y="101" width="1" height="1"/><rect x="679" y="104" width="1" height="1"/><rect x="682" y="104" width="1" height="1"/><rect x="679" y="107" width="1" height="1"/><rect x="682" y="107" width="1" height="1"/><rect x="679" y="110" width="1" height="1"/><rect x="682" y="110" width="1" height="1"/><rect x="679" y="113" width="1" height="1"/><rect x="682" y="113" width="1" height="1"/><rect x="679" y="116" width="1" height="1"/><rect x="682" y="116" width="1" height="1"/></g>
<g transform="translate(690,97)" fill="none"><rect x="3" y="1.5" width="19" height="21" fill="#6592c9" stroke="#222" stroke-width="1"/><rect x="3" y="1.5" width="4" height="21" fill="#2a3a4f"/><text x="10.5" y="16" font-family="Liberation Sans" font-size="12" fill="#fff">?</text></g>
<g fill="#a4a4a4"><rect x="727" y="101" width="1" height="1"/><rect x="730" y="101" width="1" height="1"/><rect x="727" y="104" width="1" height="1"/><rect x="730" y="104" width="1" height="1"/><rect x="727" y="107" width="1" height="1"/><rect x="730" y="107" width="1" height="1"/><rect x="727" y="110" width="1" height="1"/><rect x="730" y="110" width="1" height="1"/><rect x="727" y="113" width="1" height="1"/><rect x="730" y="113" width="1" height="1"/><rect x="727" y="116" width="1" height="1"/><rect x="730" y="116" width="1" height="1"/></g>
<g transform="translate(739,97)" fill="none"><path d="M5,6 Q9,3 15,4 Q20,3 21.5,6 Q22,10 18,14 Q14,18 10,16 Q6,14 5,10 Z" fill="#6592c9" stroke="#2e568e" stroke-width="0.9"/><path d="M2,2 L11,8 L21.5,2.5 M11,8 L14,15 M11,8 L2.5,21.5" fill="none" stroke="#2e568e" stroke-width="0.9"/><g fill="#f5d33a" stroke="#555" stroke-width="0.6"><circle cx="2.5" cy="2.5" r="2"/><circle cx="21.5" cy="2.5" r="2"/><circle cx="11" cy="8" r="2"/><circle cx="2.5" cy="21.5" r="2"/></g><path d="M13,17 L16,21 L23,12" fill="none" stroke="#333" stroke-width="2.6"/><path d="M13,17 L16,21 L23,12" fill="none" stroke="#f5d33a" stroke-width="1.6"/></g>
<g fill="#a4a4a4"><rect x="6" y="140" width="1" height="1"/><rect x="9" y="140" width="1" height="1"/><rect x="6" y="143" width="1" height="1"/><rect x="9" y="143" width="1" height="1"/><rect x="6" y="146" width="1" height="1"/><rect x="9" y="146" width="1" height="1"/><rect x="6" y="149" width="1" height="1"/><rect x="9" y="149" width="1" height="1"/><rect x="6" y="152" width="1" height="1"/><rect x="9" y="152" width="1" height="1"/><rect x="6" y="155" width="1" height="1"/><rect x="9" y="155" width="1" height="1"/></g>
<g transform="translate(18,136)" fill="none"><path d="M3,6 Q3,1 9,2 Q14,3 17,3 Q22,3 21,8 Q20,12 15,11 Q9,10 6,11 Q2,12 3,6 Z" fill="#e2e2e0" stroke="#c0c0be" stroke-width="1"/><path d="M2,16 Q3,12 7,13 Q10,14 9,18 Q8,22 4,21 Q1,20 2,16 Z" fill="#e2e2e0" stroke="#c0c0be"/><path d="M6,14 L15,9 M6,14 L15,17" stroke="#cfcfcf"/><circle cx="16" cy="9" r="2" fill="none" stroke="#d9a3a3"/><circle cx="16" cy="17" r="2" fill="none" stroke="#d9a3a3"/></g>
<path d="M48,146 L56,146 L52,150 Z" fill="#bdbdbd"/>
<g transform="translate(63,136)" fill="none"><path d="M3,6 Q3,1 9,2 Q14,3 17,3 Q22,3 21,8 Q20,12 15,11 Q9,10 6,11 Q2,12 3,6 Z" fill="#e2e2e0" stroke="#c0c0be" stroke-width="1"/><path d="M2,16 Q3,12 7,13 Q10,14 9,18 Q8,22 4,21 Q1,20 2,16 Z" fill="#e2e2e0" stroke="#c0c0be"/><rect x="13" y="13" width="11" height="11" rx="1.5" fill="#d6d2c6"/><g stroke="#f3f3f3" stroke-width="1.1"><line x1="18.5" y1="15" x2="18.5" y2="22"/><line x1="15.5" y1="16.8" x2="21.5" y2="20.2"/><line x1="15.5" y1="20.2" x2="21.5" y2="16.8"/></g><circle cx="18.5" cy="18.5" r="1.8" fill="#d6d2c6" stroke="#f3f3f3" stroke-width="1"/></g>
<g transform="translate(96,136)" fill="none"><path d="M3,5 Q5,1 9,3 V12 Q5,12 3,9 Z M14,3 Q19,1 21,5 Q21,10 16,12 H14 Z" fill="#e2e2e0" stroke="#c0c0be"/><path d="M11,2 V14 L7,19 M11,14 L15,19" stroke="#cfcfcf"/><circle cx="6" cy="20" r="2.2" fill="none" stroke="#d9a3a3"/><circle cx="16" cy="20" r="2.2" fill="none" stroke="#d9a3a3"/></g>
<g transform="translate(129,136)" fill="none"><path d="M2,5 Q2,1 8,3 L12,4 L16,3 Q22,1 22,6 Q22,13 15,15 H9 Q2,13 2,5 Z" fill="#e2e2e0" stroke="#c0c0be"/><path d="M10,4 H14 M10,7 H14 M10,10 H14 M12,15 Q9,18 12,20 Q14,22 11,23" fill="none" stroke="#c8c8c8"/></g>
<g transform="translate(162,136)" fill="none"><path d="M3,6 Q3,1 9,2 Q14,3 17,3 Q22,3 21,8 Q20,12 15,11 Q9,10 6,11 Q2,12 3,6 Z" fill="#e2e2e0" stroke="#d8d2b0" stroke-width="1"/><path d="M3,16 Q4,12 8,13 Q10,15 9,19 Q7,22 4,21 Q2,19 3,16 Z" fill="#e2e2e0" stroke="#c0c0be"/><rect x="13" y="13" width="10" height="10" fill="#d9d9d9" stroke="#ccc"/><circle cx="18" cy="18" r="2.5" fill="none" stroke="#f3f3f3" stroke-width="1.2"/></g>
<g transform="translate(195,136)" fill="none"><path d="M2,8 Q2,3 8,4 Q13,5 16,5 Q22,5 21,10 Q20,14 15,13 Q9,12 6,13 Q2,14 2,8 Z" fill="#e2e2e0" stroke="#c0c0be"/><path d="M5,8 Q6,5 10,6 Q12,8 10,10 Q7,11 5,8 Z" fill="none" stroke="#c0c0be" stroke-dasharray="1 1"/></g>
<path d="M225,146 L233,146 L229,150 Z" fill="#bdbdbd"/>
<g transform="translate(240,136)" fill="none"><path d="M2,8 Q2,3 8,4 Q13,5 16,5 Q22,5 21,10 Q20,14 15,13 Q9,12 6,13 Q2,14 2,8 Z" fill="none" stroke="#c3c3c3" stroke-dasharray="1.5 1"/><path d="M4,8 Q5,5 9,6 Q11,8 9,11 Q6,12 4,8 Z" fill="#e2e2e0" stroke="#c0c0be"/></g>
<path d="M270,146 L278,146 L274,150 Z" fill="#bdbdbd"/>
<g transform="translate(285,136)" fill="none"><path d="M2,5 Q2,1 8,2 Q13,3 16,3 Q22,3 21,8 Q20,12 15,11 Q9,10 6,11 Q2,12 2,5 Z" fill="#e2e2e0" stroke="#c0c0be"/><path d="M4,6 Q4,3 8,4 Q10,6 8,8 Q5,9 4,6 Z" fill="#d6d6d4" stroke="#c0c0be"/><rect x="13" y="13" width="11" height="11" rx="1.5" fill="#d6d2c6"/><g stroke="#f3f3f3" stroke-width="1.1"><line x1="18.5" y1="15" x2="18.5" y2="22"/><line x1="15.5" y1="16.8" x2="21.5" y2="20.2"/><line x1="15.5" y1="20.2" x2="21.5" y2="16.8"/></g><circle cx="18.5" cy="18.5" r="1.8" fill="#d6d2c6" stroke="#f3f3f3" stroke-width="1"/></g>
<path d="M315,146 L323,146 L319,150 Z" fill="#bdbdbd"/>
<g transform="translate(330,136)" fill="none"><path d="M2,5 Q2,1 8,2 Q13,3 16,3 Q22,3 21,8 Q20,12 15,11 Q9,10 6,11 Q2,12 2,5 Z" fill="#e2e2e0" stroke="#c0c0be"/><path d="M12,3 Q8,6 9,11" fill="none" stroke="#c0c0be"/><rect x="13" y="13" width="11" height="11" rx="1.5" fill="#d6d2c6"/><g stroke="#f3f3f3" stroke-width="1.1"><line x1="18.5" y1="15" x2="18.5" y2="22"/><line x1="15.5" y1="16.8" x2="21.5" y2="20.2"/><line x1="15.5" y1="20.2" x2="21.5" y2="16.8"/></g><circle cx="18.5" cy="18.5" r="1.8" fill="#d6d2c6" stroke="#f3f3f3" stroke-width="1"/></g>
<path d="M360,146 L368,146 L364,150 Z" fill="#bdbdbd"/>
<g transform="translate(375,136)" fill="none"><path d="M2,5 Q2,1 8,2 Q13,3 16,3 Q22,3 21,8 Q20,12 15,11 Q9,10 6,11 Q2,12 2,5 Z" fill="#dde0e8" stroke="#c6c6c6"/><path d="M15,3 Q20,3 21,8 Q20,12 15,11 Z" fill="#e8dcdc"/><rect x="13" y="13" width="11" height="11" rx="1.5" fill="#d6d2c6"/><g stroke="#f3f3f3" stroke-width="1.1"><line x1="18.5" y1="15" x2="18.5" y2="22"/><line x1="15.5" y1="16.8" x2="21.5" y2="20.2"/><line x1="15.5" y1="20.2" x2="21.5" y2="16.8"/></g><circle cx="18.5" cy="18.5" r="1.8" fill="#d6d2c6" stroke="#f3f3f3" stroke-width="1"/></g>
<g transform="translate(408,136)" fill="none"><path d="M3,3 L9,9 L17,2 M9,9 L8,20 M9,9 L4,15" fill="none" stroke="#d6d8d4" stroke-width="1.3"/><g fill="none" stroke="#d2d2d2"><circle cx="3" cy="3" r="1.5"/><circle cx="17" cy="2.5" r="1.5"/><circle cx="22" cy="2.5" r="1.5"/></g><rect x="12" y="12" width="10" height="11" fill="#dddddd" stroke="#ccc"/><circle cx="17" cy="17.5" r="2.5" fill="none" stroke="#f0f0f0" stroke-width="1.2"/></g>
<path d="M437,146 L445,146 L441,150 Z" fill="#bdbdbd"/>
<g transform="translate(453,136)" fill="none"><path d="M2,5 Q2,1 7,2 L12,3 L17,2 Q22,1 22,6 Q22,11 19,14 L13,15 L6,16 Q1,15 2,5 Z" fill="#e6e6e6" stroke="#d3d3d3"/><text x="17" y="23" font-family="Liberation Serif" font-size="10" fill="#cfcfcf">ʃ</text></g>
<g transform="translate(486,136)" fill="none"><path d="M2,5 Q2,1 7,2 L12,3 L17,2 Q22,1 22,6 Q22,11 19,14 L13,15 L6,16 Q1,15 2,5 Z" fill="#e6e6e6" stroke="#d3d3d3"/><text x="17" y="23" font-family="Liberation Serif" font-size="10" fill="#cfcfcf">d</text><path d="M4,17 L14,11" stroke="#d6d6d6"/></g>
<g transform="translate(519,136)" fill="none"><path d="M2,5 Q2,1 7,2 L12,3 L17,2 Q22,1 22,6 Q22,11 19,14 L13,15 L6,16 Q1,15 2,5 Z" fill="#e6e6e6" stroke="#d3d3d3"/><text x="17" y="23" font-family="Liberation Serif" font-size="10" fill="#cfcfcf">ʃ</text><path d="M4,17 L14,11" stroke="#d6d6d6"/></g>
<g transform="translate(552,136)" fill="none"><path d="M3,8 L9,3 L21,15 L15,21 Z" fill="#e0e0dc" stroke="#d3d3d3"/><path d="M6,5 L18,18" stroke="#d0d0d0" stroke-dasharray="1 1"/></g>
<g fill="#a4a4a4"><rect x="589" y="140" width="1" height="1"/><rect x="592" y="140" width="1" height="1"/><rect x="589" y="143" width="1" height="1"/><rect x="592" y="143" width="1" height="1"/><rect x="589" y="146" width="1" height="1"/><rect x="592" y="146" width="1" height="1"/><rect x="589" y="149" width="1" height="1"/><rect x="592" y="149" width="1" height="1"/><rect x="589" y="152" width="1" height="1"/><rect x="592" y="152" width="1" height="1"/><rect x="589" y="155" width="1" height="1"/><rect x="592" y="155" width="1" height="1"/></g>
<g transform="translate(602,136)" fill="none"><path d="M4,19 L14,3 L17,5 L8,21 Z M8,20 L18,4 L21,6 L12,22 Z" fill="#e2e2e0" stroke="#d0d0d0"/></g>
<path d="M620,153 L628,153 L624,157 Z" fill="#c4c4c4"/>
<g transform="translate(633,136)" fill="none"><path d="M3,22 L5,16 L17,2 L21,5 L9,19 Z" fill="#e5cf2b" stroke="#333" stroke-width="0.8"/><path d="M3,22 L5,16 L9,19 Z" fill="#f0dcb0" stroke="#333" stroke-width="0.6"/><path d="M3,22 L4,19 L6,20.5 Z" fill="#222"/><path d="M17,2 L21,5" stroke="#888" stroke-width="2"/></g>
<g transform="translate(667,136)" fill="none"><rect x="1.5" y="1.5" width="20" height="20" rx="2" fill="#e4e4e4" stroke="#d6d6d6"/><rect x="5" y="3" width="13" height="7" fill="#f6f6f6"/><rect x="5" y="13" width="12" height="8" fill="#f1f1f1"/><path d="M13,22 L21,11 L23,13 L15,23 Z" fill="#dcdcdc"/></g>
<g transform="translate(700,136)" fill="none"><path d="M3,20 L20,4" stroke="#d8d8d8" stroke-dasharray="1.5 1.5"/><rect x="1" y="18" width="4" height="4" fill="none" stroke="#d0d0d0"/><rect x="18" y="2" width="4" height="4" fill="none" stroke="#d0d0d0"/></g>
<path d="M730,146 L738,146 L734,150 Z" fill="#bdbdbd"/>
<g transform="translate(746,136)" fill="none"><path d="M2,5 Q2,1 8,2 Q13,3 16,3 Q22,3 21,8 Q20,12 15,11 Q9,10 6,11 Q2,12 2,5 Z" fill="#e2e2e0" stroke="#c0c0be"/><rect x="13" y="13" width="11" height="11" rx="1.5" fill="#d6d2c6"/><g stroke="#f3f3f3" stroke-width="1.1"><line x1="18.5" y1="15" x2="18.5" y2="22"/><line x1="15.5" y1="16.8" x2="21.5" y2="20.2"/><line x1="15.5" y1="20.2" x2="21.5" y2="16.8"/></g><circle cx="18.5" cy="18.5" r="1.8" fill="#d6d2c6" stroke="#f3f3f3" stroke-width="1"/></g>
<g transform="translate(779,136)" fill="none"><rect x="2" y="2" width="5" height="5" fill="none" stroke="#cfcfcf"/><path d="M7,4.5 H20 M4.5,7 L2,22" stroke="#d0d0d0"/><path d="M9,20 L19,10 M11,10 L21,20" stroke="#d6d6d2" stroke-width="3"/></g>
<path d="M808,146 L816,146 L812,150 Z" fill="#bdbdbd"/>
<g transform="translate(824,136)" fill="none"><rect x="2" y="4" width="18" height="5" fill="#e3e3dc" stroke="#d2d2ca"/><rect x="2" y="11" width="18" height="5" fill="#e3e3dc" stroke="#d2d2ca"/><rect x="2" y="18" width="18" height="5" fill="#e3e3dc" stroke="#d2d2ca"/><path d="M12,22 L21,4 L23,5 L14,23 Z" fill="#dcdcdc" stroke="#ccc"/></g>
<g transform="translate(855,136)" fill="none"><rect x="4" y="5" width="16" height="17" fill="#ebe5e5" stroke="#d9cccc"/><rect x="2" y="2" width="20" height="3" fill="#e6dede" stroke="#d9cccc"/><path d="M8,8 V20 M12,8 V20 M16,8 V20" stroke="#dccfcf"/></g>
<g transform="translate(889,136)" fill="none"><path d="M3,5 L15,13 M3,19 L15,11" stroke="#cfcfcf" stroke-width="1.2"/><circle cx="19" cy="6" r="3" fill="none" stroke="#cfcfcf" stroke-width="1.2"/><circle cx="19" cy="18" r="3" fill="none" stroke="#cfcfcf" stroke-width="1.2"/></g>
<g transform="translate(922,136)" fill="none"><path d="M5,5 H12 L15,8 V20 H5 Z" fill="#f1f1f1" stroke="#d3d3d3"/><path d="M9,2 H16 L19,5 V17 H15" fill="none" stroke="#d3d3d3"/><path d="M7,11 H13 M7,14 H13 M7,17 H13" stroke="#ddd"/></g>
<g transform="translate(955,136)" fill="none"><rect x="4" y="3" width="16" height="19" fill="#f1f1f1" stroke="#d3d3d3"/><rect x="8" y="1" width="8" height="4" fill="#e5e5e5" stroke="#d3d3d3"/><path d="M7,9 H17 M7,12 H17 M7,15 H17" stroke="#ddd"/></g>
<g transform="translate(988,136)" fill="none"><path d="M2,10 L10,3 V7.5 Q21,7.5 21,15.5 Q21,22 14,22 Q17,20 17,16 Q17,12.5 10,12.5 V17 Z" fill="#dcd8d4"/></g>
<g transform="translate(1021,136)" fill="none"><path d="M22,10 L14,3 V7.5 Q3,7.5 3,15.5 Q3,22 10,22 Q7,20 7,16 Q7,12.5 14,12.5 V17 Z" fill="#d8dad8"/></g>
<g fill="#a4a4a4"><rect x="1245" y="140" width="1" height="1"/><rect x="1248" y="140" width="1" height="1"/><rect x="1245" y="143" width="1" height="1"/><rect x="1248" y="143" width="1" height="1"/><rect x="1245" y="146" width="1" height="1"/><rect x="1248" y="146" width="1" height="1"/><rect x="1245" y="149" width="1" height="1"/><rect x="1248" y="149" width="1" height="1"/><rect x="1245" y="152" width="1" height="1"/><rect x="1248" y="152" width="1" height="1"/><rect x="1245" y="155" width="1" height="1"/><rect x="1248" y="155" width="1" height="1"/></g>
<defs><linearGradient id="gs" x1="0" y1="0" x2="0" y2="1"><stop offset="0" stop-color="#62a843"/><stop offset="1" stop-color="#93d47c"/></linearGradient></defs><rect x="1257" y="136" width="24" height="24" fill="url(#gs)"/><path d="M1257,160 L1281,136 V160 Z" fill="#fff" opacity="0.08"/>
<g transform="translate(1257,136)" fill="none"><circle cx="14" cy="9.5" r="6.3" fill="#7cc061" stroke="#eef6ea" stroke-width="1.8"/><line x1="4" y1="21" x2="9.5" y2="14.5" stroke="#eef6ea" stroke-width="2.6" stroke-linecap="round"/></g>
<path d="M1290,145 L1293,148 L1290,151 M1294,145 L1297,148 L1294,151" fill="none" stroke="#3a3a3a" stroke-width="1.15"/>
<g fill="#a4a4a4"><rect x="1307" y="140" width="1" height="1"/><rect x="1310" y="140" width="1" height="1"/><rect x="1307" y="143" width="1" height="1"/><rect x="1310" y="143" width="1" height="1"/><rect x="1307" y="146" width="1" height="1"/><rect x="1310" y="146" width="1" height="1"/><rect x="1307" y="149" width="1" height="1"/><rect x="1310" y="149" width="1" height="1"/><rect x="1307" y="152" width="1" height="1"/><rect x="1310" y="152" width="1" height="1"/><rect x="1307" y="155" width="1" height="1"/><rect x="1310" y="155" width="1" height="1"/></g>
<g transform="translate(1320,136)" fill="none"><path d="M4,6 L11,2.5 L13.5,5.5 L6.5,9 Z" fill="#e6e6e6" stroke="#444" stroke-width="0.8"/><path d="M9,7 L15,17" stroke="#c4761e" stroke-width="2.4"/><path d="M3,20 L8,13" stroke="#444" stroke-width="3.2" stroke-linecap="round"/><path d="M3,20 L8,13" stroke="#f0e040" stroke-width="2" stroke-linecap="round"/><path d="M13,4 Q15,14 14,22 M15.5,5 Q18,14 17,22 M18,6 Q20,14 20,22 M16,4 Q13,14 18,21" fill="none" stroke="#4f9a4f" stroke-width="0.9"/></g>
<path d="M1352,145 L1355,148 L1352,151 M1356,145 L1359,148 L1356,151" fill="none" stroke="#3a3a3a" stroke-width="1.15"/>
</svg>
<svg class="a" style="left:0;top:0" width="1365" height="1033" font-family="Liberation Sans">
<g transform="translate(9.0,7.0)" fill="none"><circle cx="7.5" cy="7.5" r="5.6" fill="none" stroke="#7cb342" stroke-width="3"/><circle cx="7.5" cy="7.5" r="5.6" fill="none" stroke="#589f2a" stroke-width="1" opacity="0.4"/><path d="M8,8 L13.5,14" stroke="#6aa12e" stroke-width="3" stroke-linecap="round"/><circle cx="7" cy="7" r="1.8" fill="#ee8a2a"/></g>
<line x1="1245" y1="15.5" x2="1256" y2="15.5" stroke="#111" stroke-width="1"/>
<rect x="1290.5" y="10.5" width="10" height="10" fill="none" stroke="#111" stroke-width="1"/>
<path d="M1336,10 L1346,20 M1346,10 L1336,20" stroke="#111" stroke-width="1.1"/>
<rect x="294.5" y="172.5" width="10" height="10" rx="2" fill="none" stroke="#555" stroke-width="1"/><rect x="298" y="174.5" width="4.5" height="4" fill="none" stroke="#555" stroke-width="0.9"/><rect x="296.5" y="176.5" width="4.5" height="4" fill="#f0f0f0" stroke="#555" stroke-width="0.9"/>
<rect x="308.5" y="172.5" width="10" height="10" rx="2" fill="none" stroke="#555" stroke-width="1"/><path d="M311,175 L316,180 M316,175 L311,180" stroke="#555" stroke-width="2.2"/>
<rect x="294.5" y="453.5" width="10" height="10" rx="2" fill="none" stroke="#555" stroke-width="1"/><rect x="298" y="455.5" width="4.5" height="4" fill="none" stroke="#555" stroke-width="0.9"/><rect x="296.5" y="457.5" width="4.5" height="4" fill="#f0f0f0" stroke="#555" stroke-width="0.9"/>
<rect x="308.5" y="453.5" width="10" height="10" rx="2" fill="none" stroke="#555" stroke-width="1"/><path d="M311,456 L316,461 M316,456 L311,461" stroke="#555" stroke-width="2.2"/>
<g transform="translate(9.0,194.0)" fill="none"><rect x="2.5" y="1.5" width="11" height="11" fill="#f0f0f0" stroke="#777" stroke-width="1"/><circle cx="13" cy="13" r="2.7" fill="#bfe0bd" stroke="#3f9a45" stroke-width="1.2"/></g>
<g transform="translate(34.0,194.0)" fill="none"><path d="M1,8 A7,7 0 0 1 13,3.5 L14.5,2 L15,8 L9,7.5 L11,5.5 A4,4 0 0 0 4.5,8 Z" fill="#4f8fdc"/><path d="M15,8 A7,7 0 0 1 3,12.5 L1.5,14 L1,8 L7,8.5 L5,10.5 A4,4 0 0 0 11.5,8 Z" fill="#4f8fdc"/></g>
<g transform="translate(59.0,194.0)" fill="none"><path d="M1,1.5 H15 V3.5 L9.5,9 V15 L6.5,13.5 V9 L1,3.5 Z" fill="#6a95c8" stroke="#4c78ad" stroke-width="0.5"/><rect x="1" y="1" width="14" height="2.3" fill="#f1dd3c"/></g>
<g transform="translate(84.5,194.0)" fill="none"><path d="M1.5,1.5 H6 M1.5,1.5 V14.5 H6" fill="none" stroke="#999" stroke-width="1"/><rect x="4" y="5" width="3" height="3" fill="none" stroke="#f09020" stroke-width="1"/><rect x="4" y="11" width="3" height="3" fill="none" stroke="#f09020" stroke-width="1"/><path d="M11,1 L15,6 H12.5 V14.5 H9.5 V6 H7 Z" fill="#4f80b8" stroke="#355f92" stroke-width="0.6"/></g>
<g transform="translate(109.0,194.0)" fill="none"><circle cx="8" cy="8" r="7" fill="#6592c9" stroke="#4a73ab" stroke-width="0.6"/><text x="6" y="12.5" font-family="Liberation Serif" font-weight="bold" font-style="italic" font-size="10" fill="#fff">i</text></g>
<path d="M309,227 L313,223 L317,227 Z" fill="#555"/>
<path d="M309,433 L313,437 L317,433 Z" fill="#555"/>
<path d="M8,224 L12,228 L8,232 Z" fill="#5f5f5f"/>
<path d="M8,242 L12,246 L8,250 Z" fill="#5f5f5f"/>
<path d="M8,368 L12,372 L8,376 Z" fill="#5f5f5f"/>
<g transform="translate(21.0,220.0)" fill="none"><circle cx="8" cy="6" r="5.2" fill="#7ea6d8" stroke="#3a5f90" stroke-width="0.7"/><path d="M5,3.5 Q8,2 10,4.5 Q8,6.5 6,5.5 Z M9.5,6.5 L12,7 L11,9 Z" fill="#2f5f9f"/><path d="M1,6.5 L8,9.5 V15.5 L1,12.5 Z" fill="#d9b21e" stroke="#333" stroke-width="0.7" stroke-linejoin="round"/><path d="M8,9.5 L15,6.5 V12.5 L8,15.5 Z" fill="#f7e46a" stroke="#333" stroke-width="0.7" stroke-linejoin="round"/></g>
<g transform="translate(21.0,238.0)" fill="none"><path d="M1.5,15.5 Q3,8 8,4 Q11,2 14.5,0.5 Q12.5,8 8,11 Q5,13 2.5,13 Z" fill="#8fb0d8" stroke="#4d6fa0" stroke-width="0.7"/></g>
<g transform="translate(21.0,256.0)" fill="none"><path d="M2,3 Q2,0.5 6,1 Q8,1.5 10,1 Q14,0.5 14.5,4 Q14.5,8 12,10 Q13,12 14,12.5 L11,12 Q10,15 8,15.5 Q6,15 6,12 Q3,11 2,8 Z" fill="#6592c9" stroke="#3d669e" stroke-width="0.7"/><path d="M6,4 Q5,8 8,10 M10,4 Q12,7 11,11" fill="none" stroke="#3d669e" stroke-width="0.7"/></g>
<g transform="translate(21.0,274.0)" fill="none"><rect x="1.5" y="1.5" width="13" height="13" fill="none" stroke="#3d5f8a" stroke-width="1" stroke-dasharray="1 1.2"/><rect x="3.5" y="3.5" width="9" height="9" fill="#6592c9"/></g>
<g transform="translate(21.0,292.0)" fill="none"><path d="M1,1 Q9,1 15,7 Q9,11 1,15 Q5,8 1,1 Z" fill="#6592c9" stroke="#3d669e" stroke-width="0.6"/><path d="M4,3 Q7,8 4,13 M8,3.5 Q10,8 8,12" fill="none" stroke="#3d669e" stroke-width="0.6"/></g>
<g transform="translate(21.0,310.0)" fill="none"><rect x="1" y="3" width="14" height="10" rx="4" fill="#6592c9" stroke="#2e4f7c" stroke-width="1.2"/></g>
<g transform="translate(21.0,328.0)" fill="none"><circle cx="8" cy="8" r="6.5" fill="#dfe9f5" stroke="#7a9ccc" stroke-width="0.9"/><path d="M4,4 Q7,5 6,8 Q4,10 5,13 M9,3 Q11,6 10,9 L12,12" fill="none" stroke="#5a6f88" stroke-width="1.3"/></g>
<g transform="translate(21.0,346.0)" fill="none"><rect x="1.5" y="1.5" width="13" height="13" fill="#6c7d92"/><g stroke="#f4f4f4" stroke-width="1"><line x1="4.8" y1="1" x2="4.8" y2="15"/><line x1="8" y1="1" x2="8" y2="15"/><line x1="11.2" y1="1" x2="11.2" y2="15"/><line x1="1" y1="4.8" x2="15" y2="4.8"/><line x1="1" y1="8" x2="15" y2="8"/><line x1="1" y1="11.2" x2="15" y2="11.2"/></g></g>
<g transform="translate(21.0,364.0)" fill="none"><rect x="1.5" y="1.5" width="3.6" height="3.6" fill="#6592c9"/><rect x="6.2" y="1.5" width="3.6" height="3.6" fill="#6592c9"/><rect x="10.9" y="1.5" width="3.6" height="3.6" fill="#6592c9"/><rect x="1.5" y="6.2" width="3.6" height="3.6" fill="#6592c9"/><rect x="6.2" y="6.2" width="3.6" height="3.6" fill="#6592c9"/><rect x="10.9" y="6.2" width="3.6" height="3.6" fill="#6592c9"/><rect x="1.5" y="10.9" width="3.6" height="3.6" fill="#6592c9"/><rect x="6.2" y="10.9" width="3.6" height="3.6" fill="#6592c9"/><rect x="10.9" y="10.9" width="3.6" height="3.6" fill="#6592c9"/></g>
<g transform="translate(21.0,382.0)" fill="none"><circle cx="8" cy="8" r="7" fill="#6592c9" stroke="#2e4f7c" stroke-width="1"/><path d="M1,6 H15 M1,10 H15 M8,1 V15 M4,2 Q2,8 4,14 M12,2 Q14,8 12,14" fill="none" stroke="#fff" stroke-width="0.8"/></g>
<g transform="translate(21.0,400.0)" fill="none"><circle cx="8" cy="8" r="7" fill="#edf3fa" stroke="#8aaad4" stroke-width="0.9"/><path d="M3,4 L6,11 L8,5 L10,11 L13,4" fill="none" stroke="#555" stroke-width="0.9"/></g>
<g transform="translate(21.0,418.0)" fill="none"><circle cx="8" cy="8" r="7" fill="#e5eef8" stroke="#8aaad4" stroke-width="0.9"/><path d="M3,6 Q6,5 7,8 Q5,11 6,14 Q3,12 3,6 Z M9,2 Q12,4 11,7 L13,9" fill="#3a4a60" stroke="#3a4a60" stroke-width="0.8"/></g>
<g fill="#b0b0b0"><rect x="150" y="446" width="1" height="1"/><rect x="153" y="446" width="1" height="1"/><rect x="156" y="446" width="1" height="1"/><rect x="159" y="446" width="1" height="1"/><rect x="162" y="446" width="1" height="1"/><rect x="165" y="446" width="1" height="1"/><rect x="168" y="446" width="1" height="1"/></g>
<g transform="translate(8.0,475.0)" fill="none"><path d="M1,6 L8,9 L7,14 L0.5,11 Z" fill="#e24b3b"/><path d="M1.5,3.5 L8,6.5 L7.5,11 L1,8 Z" fill="#f5d43a"/><path d="M2,6 L8,8.5 L7.5,12 L1.5,9.5 Z" fill="#5b8ed0" opacity="0.8"/><path d="M6,9 L10,13 L13,10 L9,6 Z" fill="#d2a86a" stroke="#a57a3e" stroke-width="0.6"/><line x1="11" y1="8" x2="15.5" y2="2.5" stroke="#c8963e" stroke-width="1.6"/></g>
<g transform="translate(34.0,475.0)" fill="none"><path d="M1.5,6 V15 H10" fill="none" stroke="#777" stroke-width="1"/><rect x="4" y="3" width="9" height="10" fill="#fff" stroke="#777" stroke-width="1"/><path d="M8,13 V1.5 Q9.5,0 11,1.5 V8" fill="none" stroke="#4f7fbf" stroke-width="1.1"/><rect x="10" y="10" width="6" height="6" rx="1" fill="#48a04e"/><circle cx="13" cy="13" r="1.6" fill="#dff0dd"/></g>
<g transform="translate(59.0,475.0)" fill="none"><path d="M1,8 Q8,1 15,8 Q8,14 1,8 Z" fill="#fff" stroke="#8a8a8a" stroke-width="0.9"/><circle cx="8" cy="8" r="3.6" fill="#5c8ed0"/><circle cx="8" cy="7.5" r="1.4" fill="#111"/><path d="M11,12.5 H16 L13.5,15 Z" fill="#444"/></g>
<g transform="translate(84.0,475.0)" fill="none"><path d="M1,1.5 H15 V3.5 L9.5,9 V15 L6.5,13.5 V9 L1,3.5 Z" fill="#6a95c8" stroke="#4c78ad" stroke-width="0.5"/><rect x="1" y="1" width="14" height="2.3" fill="#f1dd3c"/><path d="M11,12.5 H16 L13.5,15 Z" fill="#444"/></g>
<g transform="translate(110.0,475.0)" fill="none"><text x="1" y="12" font-family="Liberation Serif" font-size="14" fill="#c8c8c8">ε</text><rect x="9" y="10" width="5" height="5" fill="#dcdcdc"/></g>
<path d="M130,481 H138 L134,485 Z" fill="#bbb"/>
<g transform="translate(146.0,475.0)" fill="none"><path d="M1.5,1.5 H6 M1.5,1.5 V14.5 H6" fill="none" stroke="#999" stroke-width="1"/><rect x="4" y="5" width="3" height="3" fill="none" stroke="#f09020" stroke-width="1"/><rect x="4" y="11" width="3" height="3" fill="none" stroke="#f09020" stroke-width="1"/><path d="M11,15 L15,10 H12.5 V1.5 H9.5 V10 H7 Z" fill="#4f80b8" stroke="#355f92" stroke-width="0.6"/></g>
<g transform="translate(171.0,475.0)" fill="none"><path d="M1.5,1.5 H6 M1.5,1.5 V14.5 H6" fill="none" stroke="#999" stroke-width="1"/><rect x="4" y="5" width="3" height="3" fill="none" stroke="#f09020" stroke-width="1"/><rect x="4" y="11" width="3" height="3" fill="none" stroke="#f09020" stroke-width="1"/><path d="M11,1 L15,6 H12.5 V14.5 H9.5 V6 H7 Z" fill="#4f80b8" stroke="#355f92" stroke-width="0.6"/></g>
<g transform="translate(196.0,475.0)" fill="none"><rect x="1.5" y="1.5" width="12" height="12" fill="none" stroke="#666" stroke-width="1"/><rect x="9" y="10" width="7" height="5.5" rx="1" fill="#e03030"/><rect x="10.5" y="12.2" width="4" height="1.2" fill="#fff"/></g>
<rect x="25.5" y="502.5" width="13" height="13" fill="#fff" stroke="#adadad" stroke-width="1"/>
<rect x="45" y="508" width="16" height="2" fill="#8fa89a"/>
<rect x="25.5" y="520.5" width="13" height="13" fill="#fff" stroke="#adadad" stroke-width="1"/>
<rect x="45.5" y="519" width="15" height="15" fill="#fea11e" stroke="#5a3a10" stroke-width="1"/>
<rect x="298.5" y="518.5" width="17" height="17" rx="1" fill="#f6f6f6" stroke="#d0d0d0"/><path d="M301.5,522 H312.5 L308.5,527.5 V532 L305.5,530.5 V527.5 Z" fill="none" stroke="#777" stroke-width="1"/>
<path d="M10,541 L14,545 L10,549 Z" fill="#5f5f5f"/>
<rect x="25.5" y="538.5" width="13" height="13" fill="#fff" stroke="#adadad" stroke-width="1"/>
<rect x="47.00" y="539.00" width="4.4" height="4.4" fill="#1f3349"/><rect x="51.33" y="539.00" width="4.4" height="4.4" fill="#a9c5e3"/><rect x="55.66" y="539.00" width="4.4" height="4.4" fill="#1f3349"/><rect x="47.00" y="543.33" width="4.4" height="4.4" fill="#a9c5e3"/><rect x="51.33" y="543.33" width="4.4" height="4.4" fill="#1f3349"/><rect x="55.66" y="543.33" width="4.4" height="4.4" fill="#a9c5e3"/><rect x="47.00" y="547.66" width="4.4" height="4.4" fill="#1f3349"/><rect x="51.33" y="547.66" width="4.4" height="4.4" fill="#a9c5e3"/><rect x="55.66" y="547.66" width="4.4" height="4.4" fill="#dce8f4"/>
<path d="M10,559 L14,563 L10,567 Z" fill="#5f5f5f"/>
<rect x="25.5" y="556.5" width="13" height="13" fill="#fff" stroke="#adadad" stroke-width="1"/>
<rect x="47.00" y="557.00" width="4.4" height="4.4" fill="#1f3349"/><rect x="51.33" y="557.00" width="4.4" height="4.4" fill="#a9c5e3"/><rect x="55.66" y="557.00" width="4.4" height="4.4" fill="#1f3349"/><rect x="47.00" y="561.33" width="4.4" height="4.4" fill="#a9c5e3"/><rect x="51.33" y="561.33" width="4.4" height="4.4" fill="#1f3349"/><rect x="55.66" y="561.33" width="4.4" height="4.4" fill="#a9c5e3"/><rect x="47.00" y="565.66" width="4.4" height="4.4" fill="#1f3349"/><rect x="51.33" y="565.66" width="4.4" height="4.4" fill="#a9c5e3"/><rect x="55.66" y="565.66" width="4.4" height="4.4" fill="#dce8f4"/>
<path d="M10,577 L14,581 L10,585 Z" fill="#5f5f5f"/>
<rect x="25.5" y="574.5" width="13" height="13" fill="#fff" stroke="#adadad" stroke-width="1"/>
<rect x="47.00" y="575.00" width="4.4" height="4.4" fill="#1f3349"/><rect x="51.33" y="575.00" width="4.4" height="4.4" fill="#a9c5e3"/><rect x="55.66" y="575.00" width="4.4" height="4.4" fill="#1f3349"/><rect x="47.00" y="579.33" width="4.4" height="4.4" fill="#a9c5e3"/><rect x="51.33" y="579.33" width="4.4" height="4.4" fill="#1f3349"/><rect x="55.66" y="579.33" width="4.4" height="4.4" fill="#a9c5e3"/><rect x="47.00" y="583.66" width="4.4" height="4.4" fill="#1f3349"/><rect x="51.33" y="583.66" width="4.4" height="4.4" fill="#a9c5e3"/><rect x="55.66" y="583.66" width="4.4" height="4.4" fill="#dce8f4"/>
<path d="M10,595 L14,599 L10,603 Z" fill="#5f5f5f"/>
<rect x="25.5" y="592.5" width="13" height="13" fill="#fff" stroke="#adadad" stroke-width="1"/>
<rect x="47.00" y="593.00" width="4.4" height="4.4" fill="#1f3349"/><rect x="51.33" y="593.00" width="4.4" height="4.4" fill="#a9c5e3"/><rect x="55.66" y="593.00" width="4.4" height="4.4" fill="#1f3349"/><rect x="47.00" y="597.33" width="4.4" height="4.4" fill="#a9c5e3"/><rect x="51.33" y="597.33" width="4.4" height="4.4" fill="#1f3349"/><rect x="55.66" y="597.33" width="4.4" height="4.4" fill="#a9c5e3"/><rect x="47.00" y="601.66" width="4.4" height="4.4" fill="#1f3349"/><rect x="51.33" y="601.66" width="4.4" height="4.4" fill="#a9c5e3"/><rect x="55.66" y="601.66" width="4.4" height="4.4" fill="#dce8f4"/>
<path d="M10,613 L14,617 L10,621 Z" fill="#5f5f5f"/>
<rect x="25.5" y="610.5" width="13" height="13" fill="#fff" stroke="#adadad" stroke-width="1"/>
<rect x="47.00" y="611.00" width="4.4" height="4.4" fill="#1f3349"/><rect x="51.33" y="611.00" width="4.4" height="4.4" fill="#a9c5e3"/><rect x="55.66" y="611.00" width="4.4" height="4.4" fill="#1f3349"/><rect x="47.00" y="615.33" width="4.4" height="4.4" fill="#a9c5e3"/><rect x="51.33" y="615.33" width="4.4" height="4.4" fill="#1f3349"/><rect x="55.66" y="615.33" width="4.4" height="4.4" fill="#a9c5e3"/><rect x="47.00" y="619.66" width="4.4" height="4.4" fill="#1f3349"/><rect x="51.33" y="619.66" width="4.4" height="4.4" fill="#a9c5e3"/><rect x="55.66" y="619.66" width="4.4" height="4.4" fill="#dce8f4"/>
<path d="M10,631 L14,635 L10,639 Z" fill="#5f5f5f"/>
<rect x="25.5" y="628.5" width="13" height="13" fill="#fff" stroke="#adadad" stroke-width="1"/>
<rect x="47.00" y="629.00" width="4.4" height="4.4" fill="#1f3349"/><rect x="51.33" y="629.00" width="4.4" height="4.4" fill="#a9c5e3"/><rect x="55.66" y="629.00" width="4.4" height="4.4" fill="#1f3349"/><rect x="47.00" y="633.33" width="4.4" height="4.4" fill="#a9c5e3"/><rect x="51.33" y="633.33" width="4.4" height="4.4" fill="#1f3349"/><rect x="55.66" y="633.33" width="4.4" height="4.4" fill="#a9c5e3"/><rect x="47.00" y="637.66" width="4.4" height="4.4" fill="#1f3349"/><rect x="51.33" y="637.66" width="4.4" height="4.4" fill="#a9c5e3"/><rect x="55.66" y="637.66" width="4.4" height="4.4" fill="#dce8f4"/>
<path d="M10,649 L14,653 L10,657 Z" fill="#5f5f5f"/>
<rect x="25.5" y="646.5" width="13" height="13" fill="#fff" stroke="#adadad" stroke-width="1"/>
<rect x="47.00" y="647.00" width="4.4" height="4.4" fill="#1f3349"/><rect x="51.33" y="647.00" width="4.4" height="4.4" fill="#a9c5e3"/><rect x="55.66" y="647.00" width="4.4" height="4.4" fill="#1f3349"/><rect x="47.00" y="651.33" width="4.4" height="4.4" fill="#a9c5e3"/><rect x="51.33" y="651.33" width="4.4" height="4.4" fill="#1f3349"/><rect x="55.66" y="651.33" width="4.4" height="4.4" fill="#a9c5e3"/><rect x="47.00" y="655.66" width="4.4" height="4.4" fill="#1f3349"/><rect x="51.33" y="655.66" width="4.4" height="4.4" fill="#a9c5e3"/><rect x="55.66" y="655.66" width="4.4" height="4.4" fill="#dce8f4"/>
<path d="M10,667 L14,671 L10,675 Z" fill="#5f5f5f"/>
<rect x="25.5" y="664.5" width="13" height="13" fill="#fff" stroke="#adadad" stroke-width="1"/>
<rect x="47.00" y="665.00" width="4.4" height="4.4" fill="#1f3349"/><rect x="51.33" y="665.00" width="4.4" height="4.4" fill="#a9c5e3"/><rect x="55.66" y="665.00" width="4.4" height="4.4" fill="#1f3349"/><rect x="47.00" y="669.33" width="4.4" height="4.4" fill="#a9c5e3"/><rect x="51.33" y="669.33" width="4.4" height="4.4" fill="#1f3349"/><rect x="55.66" y="669.33" width="4.4" height="4.4" fill="#a9c5e3"/><rect x="47.00" y="673.66" width="4.4" height="4.4" fill="#1f3349"/><rect x="51.33" y="673.66" width="4.4" height="4.4" fill="#a9c5e3"/><rect x="55.66" y="673.66" width="4.4" height="4.4" fill="#dce8f4"/>
<path d="M10,685 L14,689 L10,693 Z" fill="#5f5f5f"/>
<rect x="25.5" y="682.5" width="13" height="13" fill="#fff" stroke="#adadad" stroke-width="1"/>
<rect x="47.00" y="683.00" width="4.4" height="4.4" fill="#1f3349"/><rect x="51.33" y="683.00" width="4.4" height="4.4" fill="#a9c5e3"/><rect x="55.66" y="683.00" width="4.4" height="4.4" fill="#1f3349"/><rect x="47.00" y="687.33" width="4.4" height="4.4" fill="#a9c5e3"/><rect x="51.33" y="687.33" width="4.4" height="4.4" fill="#1f3349"/><rect x="55.66" y="687.33" width="4.4" height="4.4" fill="#a9c5e3"/><rect x="47.00" y="691.66" width="4.4" height="4.4" fill="#1f3349"/><rect x="51.33" y="691.66" width="4.4" height="4.4" fill="#a9c5e3"/><rect x="55.66" y="691.66" width="4.4" height="4.4" fill="#dce8f4"/>
<rect x="25.5" y="700.5" width="13" height="13" fill="#fff" stroke="#adadad" stroke-width="1"/>
<path d="M28,707 L31,711 L36,702" fill="none" stroke="#111" stroke-width="1.7"/>
<rect x="45.5" y="699" width="15" height="15" fill="#b4474b" stroke="#3a2020" stroke-width="1"/>
<rect x="25.5" y="718.5" width="13" height="13" fill="#fff" stroke="#adadad" stroke-width="1"/>
<rect x="45.5" y="717" width="15" height="15" fill="#fdb472" stroke="#c08050" stroke-width="0.8"/>
<rect x="298.5" y="716.5" width="17" height="17" rx="1" fill="#f6f6f6" stroke="#d0d0d0"/><path d="M301.5,720 H312.5 L308.5,725.5 V730 L305.5,728.5 V725.5 Z" fill="none" stroke="#777" stroke-width="1"/>
<g fill="#b8b8b8"><rect x="323" y="580" width="1" height="1"/><rect x="323" y="583" width="1" height="1"/><rect x="323" y="586" width="1" height="1"/><rect x="323" y="589" width="1" height="1"/><rect x="323" y="592" width="1" height="1"/><rect x="323" y="595" width="1" height="1"/></g>
<circle cx="19" cy="1016" r="4.3" fill="none" stroke="#777" stroke-width="1.2"/><line x1="22" y1="1019" x2="25.5" y2="1022.5" stroke="#777" stroke-width="1.5"/>
<g transform="translate(368.0,1010.0)" fill="none"><path d="M3,2 L13,14 M13,2 L3,14" stroke="#333" stroke-width="1"/><ellipse cx="7" cy="8" rx="4.5" ry="5.5" fill="#555"/><circle cx="9" cy="11" r="2.5" fill="#ddd" stroke="#333" stroke-width="0.7"/><path d="M5,4 Q7,2 9,4" stroke="#bbb" fill="none"/></g>
<path d="M897,1016 H905 L901,1020 Z" fill="#555"/>
<g transform="translate(923.0,1010.0)" fill="none"><path d="M4.5,7 V5 A3.5,3.5 0 0 1 11.5,5 V7" fill="none" stroke="#666" stroke-width="1.6"/><rect x="2.5" y="7" width="11" height="8" rx="1" fill="#666"/></g>
<path d="M1025.5,1015.5 L1029.5,1011.5 L1033.5,1015.5 Z M1025.5,1020.5 L1029.5,1024.5 L1033.5,1020.5 Z" fill="#555"/>
<path d="M1131.5,1015.5 L1135.5,1011.5 L1139.5,1015.5 Z M1131.5,1020.5 L1135.5,1024.5 L1139.5,1020.5 Z" fill="#555"/>
<rect x="1150.5" y="1011.5" width="13" height="13" fill="#fff" stroke="#555" stroke-width="1"/><path d="M1153,1018 L1156,1022 L1161,1013" fill="none" stroke="#111" stroke-width="1.6"/>
<g transform="translate(1218.0,1010.0)" fill="none"><circle cx="8" cy="8" r="6.5" fill="none" stroke="#777" stroke-width="1"/><path d="M1.5,6 H14.5 M1.5,10 H14.5 M8,1.5 V14.5 M5,2 Q3,8 5,14 M11,2 Q13,8 11,14" fill="none" stroke="#777" stroke-width="0.8"/></g>
<g transform="translate(1317.0,1010.0)" fill="none"><ellipse cx="8" cy="7" rx="8" ry="6.3" fill="#666"/><path d="M9,12 L14,15 L12,11 Z" fill="#666"/><circle cx="4.3" cy="7" r="1.2" fill="#fff"/><circle cx="8" cy="7" r="1.2" fill="#fff"/><circle cx="11.7" cy="7" r="1.2" fill="#fff"/></g>
<g fill="#bbb"><rect x="1360" y="1030" width="1" height="1"/><rect x="1357" y="1030" width="1" height="1"/><rect x="1354" y="1030" width="1" height="1"/><rect x="1351" y="1030" width="1" height="1"/><rect x="1360" y="1027" width="1" height="1"/><rect x="1357" y="1027" width="1" height="1"/><rect x="1354" y="1027" width="1" height="1"/><rect x="1360" y="1024" width="1" height="1"/><rect x="1357" y="1024" width="1" height="1"/><rect x="1360" y="1021" width="1" height="1"/></g>
</svg>
</body></html>
